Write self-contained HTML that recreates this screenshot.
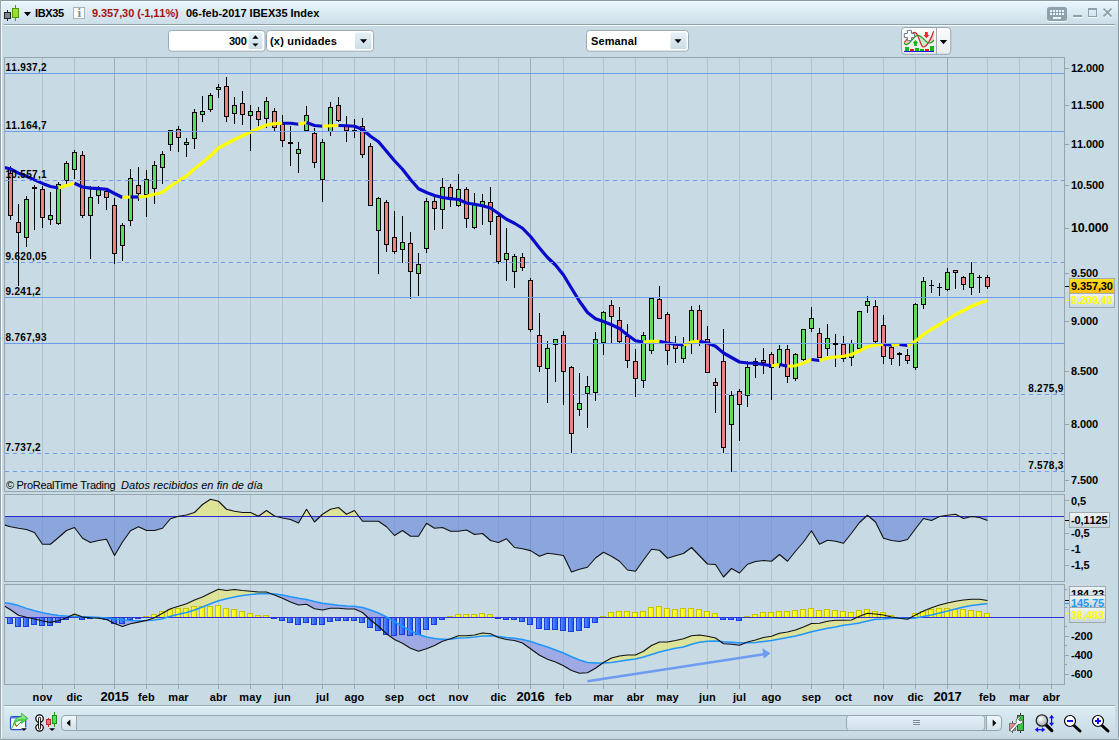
<!DOCTYPE html>
<html lang="es"><head><meta charset="utf-8"><title>IBX35 - IBEX35 Index</title>
<style>
html,body{margin:0;padding:0;background:#C8DAE4;}
body{width:1119px;height:740px;overflow:hidden;position:relative;font-family:"Liberation Sans",Arial,sans-serif;}
svg{position:absolute;left:0;top:0;display:block}
text{font-family:"Liberation Sans",Arial,sans-serif;font-size:11px;font-weight:bold;fill:#000;font-kerning:none}
.ax{font-size:11px;font-weight:bold;letter-spacing:-0.12px}
.yr{font-size:13px;font-weight:bold;letter-spacing:-0.25px}
.big{font-size:12.5px;letter-spacing:-0.15px}
.mo{font-size:11px;letter-spacing:0.1px}
.lb{font-size:10px;letter-spacing:0.3px}
.reg{font-weight:normal}
.crisp{shape-rendering:crispEdges}
</style></head><body>
<svg width="1119" height="740" viewBox="0 0 1119 740">
<defs>
<linearGradient id="gTitle" x1="0" y1="0" x2="0" y2="1"><stop offset="0" stop-color="#E8F7FC"/><stop offset="1" stop-color="#CBDDE7"/></linearGradient>
<linearGradient id="gBottom" x1="0" y1="0" x2="0" y2="1"><stop offset="0" stop-color="#DCECF5"/><stop offset="1" stop-color="#C6D8E2"/></linearGradient>
<linearGradient id="gYel" x1="0" y1="0" x2="0" y2="1"><stop offset="0" stop-color="#FFE11E"/><stop offset="1" stop-color="#F9BC12"/></linearGradient>
<linearGradient id="gLab" x1="0" y1="0" x2="0" y2="1"><stop offset="0" stop-color="#EEF5F9"/><stop offset="1" stop-color="#C6D6DF"/></linearGradient>
<linearGradient id="gSpin" x1="0" y1="0" x2="0" y2="1"><stop offset="0" stop-color="#E6F0F6"/><stop offset="1" stop-color="#CCDDE7"/></linearGradient>
<linearGradient id="gBtn" x1="0" y1="0" x2="0" y2="1"><stop offset="0" stop-color="#F2F8FB"/><stop offset="1" stop-color="#D2E2EB"/></linearGradient>
<linearGradient id="gThumb" x1="0" y1="0" x2="0" y2="1"><stop offset="0" stop-color="#E4F1F8"/><stop offset="1" stop-color="#CFE0EA"/></linearGradient>
<clipPath id="cpMain"><rect x="5" y="58" width="1059" height="433"/></clipPath>
<clipPath id="cpI1"><rect x="5" y="495" width="1059" height="86"/></clipPath>
<clipPath id="cpI2"><rect x="5" y="585" width="1059" height="99"/></clipPath>
</defs>

<rect x="0" y="0" width="1119" height="740" fill="#C8DAE4"/>
<rect x="1" y="1" width="1117" height="23" fill="url(#gTitle)"/>
<g class="crisp">
<rect x="0" y="0" width="1119" height="1" fill="#8C9BA3"/>
<rect x="1" y="1" width="1117" height="1" fill="#F2FBFE"/>
<rect x="0" y="0" width="1" height="740" fill="#96A4AB"/>
<rect x="1" y="1" width="1" height="737" fill="#F4FAFD"/>
<rect x="1118" y="0" width="1" height="740" fill="#8C9BA3"/>
<rect x="4" y="24" width="1111" height="1" fill="#8FA1AB"/>
<rect x="4" y="25" width="1111" height="1" fill="#F3F9FC"/>
<rect x="4" y="707" width="1111" height="31" fill="url(#gBottom)"/>
<rect x="4" y="705" width="1111" height="1" fill="#98AAB4"/>
<rect x="4" y="706" width="1111" height="1" fill="#F3F9FC"/>
<rect x="0" y="738" width="1119" height="1" fill="#C0D1DA"/>
<rect x="0" y="739" width="1119" height="1" fill="#97A4AB"/>
</g>
<g class="crisp">
<rect x="42" y="58" width="1" height="433" fill="#B1C3CD"/>
<rect x="74" y="58" width="1" height="433" fill="#B1C3CD"/>
<rect x="114" y="58" width="1" height="433" fill="#9DAEB8"/>
<rect x="146" y="58" width="1" height="433" fill="#B1C3CD"/>
<rect x="178" y="58" width="1" height="433" fill="#B1C3CD"/>
<rect x="218" y="58" width="1" height="433" fill="#B1C3CD"/>
<rect x="250" y="58" width="1" height="433" fill="#B1C3CD"/>
<rect x="282" y="58" width="1" height="433" fill="#B1C3CD"/>
<rect x="322" y="58" width="1" height="433" fill="#B1C3CD"/>
<rect x="354" y="58" width="1" height="433" fill="#B1C3CD"/>
<rect x="394" y="58" width="1" height="433" fill="#B1C3CD"/>
<rect x="426" y="58" width="1" height="433" fill="#B1C3CD"/>
<rect x="458" y="58" width="1" height="433" fill="#B1C3CD"/>
<rect x="498" y="58" width="1" height="433" fill="#B1C3CD"/>
<rect x="530" y="58" width="1" height="433" fill="#9DAEB8"/>
<rect x="563" y="58" width="1" height="433" fill="#B1C3CD"/>
<rect x="603" y="58" width="1" height="433" fill="#B1C3CD"/>
<rect x="635" y="58" width="1" height="433" fill="#B1C3CD"/>
<rect x="667" y="58" width="1" height="433" fill="#B1C3CD"/>
<rect x="707" y="58" width="1" height="433" fill="#B1C3CD"/>
<rect x="739" y="58" width="1" height="433" fill="#B1C3CD"/>
<rect x="771" y="58" width="1" height="433" fill="#B1C3CD"/>
<rect x="811" y="58" width="1" height="433" fill="#B1C3CD"/>
<rect x="843" y="58" width="1" height="433" fill="#B1C3CD"/>
<rect x="883" y="58" width="1" height="433" fill="#B1C3CD"/>
<rect x="915" y="58" width="1" height="433" fill="#B1C3CD"/>
<rect x="947" y="58" width="1" height="433" fill="#9DAEB8"/>
<rect x="987" y="58" width="1" height="433" fill="#B1C3CD"/>
<rect x="1019" y="58" width="1" height="433" fill="#B1C3CD"/>
<rect x="1051" y="58" width="1" height="433" fill="#B1C3CD"/>
<rect x="42" y="495" width="1" height="86" fill="#B1C3CD"/>
<rect x="74" y="495" width="1" height="86" fill="#B1C3CD"/>
<rect x="114" y="495" width="1" height="86" fill="#9DAEB8"/>
<rect x="146" y="495" width="1" height="86" fill="#B1C3CD"/>
<rect x="178" y="495" width="1" height="86" fill="#B1C3CD"/>
<rect x="218" y="495" width="1" height="86" fill="#B1C3CD"/>
<rect x="250" y="495" width="1" height="86" fill="#B1C3CD"/>
<rect x="282" y="495" width="1" height="86" fill="#B1C3CD"/>
<rect x="322" y="495" width="1" height="86" fill="#B1C3CD"/>
<rect x="354" y="495" width="1" height="86" fill="#B1C3CD"/>
<rect x="394" y="495" width="1" height="86" fill="#B1C3CD"/>
<rect x="426" y="495" width="1" height="86" fill="#B1C3CD"/>
<rect x="458" y="495" width="1" height="86" fill="#B1C3CD"/>
<rect x="498" y="495" width="1" height="86" fill="#B1C3CD"/>
<rect x="530" y="495" width="1" height="86" fill="#9DAEB8"/>
<rect x="563" y="495" width="1" height="86" fill="#B1C3CD"/>
<rect x="603" y="495" width="1" height="86" fill="#B1C3CD"/>
<rect x="635" y="495" width="1" height="86" fill="#B1C3CD"/>
<rect x="667" y="495" width="1" height="86" fill="#B1C3CD"/>
<rect x="707" y="495" width="1" height="86" fill="#B1C3CD"/>
<rect x="739" y="495" width="1" height="86" fill="#B1C3CD"/>
<rect x="771" y="495" width="1" height="86" fill="#B1C3CD"/>
<rect x="811" y="495" width="1" height="86" fill="#B1C3CD"/>
<rect x="843" y="495" width="1" height="86" fill="#B1C3CD"/>
<rect x="883" y="495" width="1" height="86" fill="#B1C3CD"/>
<rect x="915" y="495" width="1" height="86" fill="#B1C3CD"/>
<rect x="947" y="495" width="1" height="86" fill="#9DAEB8"/>
<rect x="987" y="495" width="1" height="86" fill="#B1C3CD"/>
<rect x="1019" y="495" width="1" height="86" fill="#B1C3CD"/>
<rect x="1051" y="495" width="1" height="86" fill="#B1C3CD"/>
<rect x="42" y="585" width="1" height="99" fill="#B1C3CD"/>
<rect x="74" y="585" width="1" height="99" fill="#B1C3CD"/>
<rect x="114" y="585" width="1" height="99" fill="#9DAEB8"/>
<rect x="146" y="585" width="1" height="99" fill="#B1C3CD"/>
<rect x="178" y="585" width="1" height="99" fill="#B1C3CD"/>
<rect x="218" y="585" width="1" height="99" fill="#B1C3CD"/>
<rect x="250" y="585" width="1" height="99" fill="#B1C3CD"/>
<rect x="282" y="585" width="1" height="99" fill="#B1C3CD"/>
<rect x="322" y="585" width="1" height="99" fill="#B1C3CD"/>
<rect x="354" y="585" width="1" height="99" fill="#B1C3CD"/>
<rect x="394" y="585" width="1" height="99" fill="#B1C3CD"/>
<rect x="426" y="585" width="1" height="99" fill="#B1C3CD"/>
<rect x="458" y="585" width="1" height="99" fill="#B1C3CD"/>
<rect x="498" y="585" width="1" height="99" fill="#B1C3CD"/>
<rect x="530" y="585" width="1" height="99" fill="#9DAEB8"/>
<rect x="563" y="585" width="1" height="99" fill="#B1C3CD"/>
<rect x="603" y="585" width="1" height="99" fill="#B1C3CD"/>
<rect x="635" y="585" width="1" height="99" fill="#B1C3CD"/>
<rect x="667" y="585" width="1" height="99" fill="#B1C3CD"/>
<rect x="707" y="585" width="1" height="99" fill="#B1C3CD"/>
<rect x="739" y="585" width="1" height="99" fill="#B1C3CD"/>
<rect x="771" y="585" width="1" height="99" fill="#B1C3CD"/>
<rect x="811" y="585" width="1" height="99" fill="#B1C3CD"/>
<rect x="843" y="585" width="1" height="99" fill="#B1C3CD"/>
<rect x="883" y="585" width="1" height="99" fill="#B1C3CD"/>
<rect x="915" y="585" width="1" height="99" fill="#B1C3CD"/>
<rect x="947" y="585" width="1" height="99" fill="#9DAEB8"/>
<rect x="987" y="585" width="1" height="99" fill="#B1C3CD"/>
<rect x="1019" y="585" width="1" height="99" fill="#B1C3CD"/>
<rect x="1051" y="585" width="1" height="99" fill="#B1C3CD"/>
<rect x="4.5" y="57.5" width="1060" height="434" fill="none" stroke="#95A6AF" stroke-width="1"/>
<rect x="4.5" y="494.5" width="1060" height="87" fill="none" stroke="#95A6AF" stroke-width="1"/>
<rect x="4.5" y="584.5" width="1060" height="100" fill="none" stroke="#95A6AF" stroke-width="1"/>
</g>
<g class="crisp" clip-path="url(#cpMain)">
<rect x="10" y="166" width="1" height="54" fill="#000"/>
<rect x="8" y="173" width="5" height="43" fill="#000"/>
<rect x="9" y="174" width="3" height="41" fill="#F08080"/>
<rect x="18" y="204" width="1" height="82" fill="#000"/>
<rect x="16" y="222" width="5" height="11" fill="#000"/>
<rect x="17" y="223" width="3" height="9" fill="#F08080"/>
<rect x="26" y="196" width="1" height="51" fill="#000"/>
<rect x="24" y="199" width="5" height="39" fill="#000"/>
<rect x="25" y="200" width="3" height="37" fill="#5CDC5C"/>
<rect x="34" y="185" width="1" height="45" fill="#000"/>
<rect x="32" y="187" width="5" height="2" fill="#000"/>
<rect x="42" y="186" width="1" height="42" fill="#000"/>
<rect x="40" y="189" width="5" height="29" fill="#000"/>
<rect x="41" y="190" width="3" height="27" fill="#F08080"/>
<rect x="50" y="192" width="1" height="33" fill="#000"/>
<rect x="48" y="215" width="5" height="5" fill="#000"/>
<rect x="49" y="216" width="3" height="3" fill="#5CDC5C"/>
<rect x="58" y="182" width="1" height="43" fill="#000"/>
<rect x="56" y="184" width="5" height="40" fill="#000"/>
<rect x="57" y="185" width="3" height="38" fill="#5CDC5C"/>
<rect x="66" y="161" width="1" height="23" fill="#000"/>
<rect x="64" y="163" width="5" height="18" fill="#000"/>
<rect x="65" y="164" width="3" height="16" fill="#5CDC5C"/>
<rect x="74" y="150" width="1" height="29" fill="#000"/>
<rect x="72" y="152" width="5" height="18" fill="#000"/>
<rect x="73" y="153" width="3" height="16" fill="#5CDC5C"/>
<rect x="82" y="151" width="1" height="67" fill="#000"/>
<rect x="80" y="155" width="5" height="61" fill="#000"/>
<rect x="81" y="156" width="3" height="59" fill="#F08080"/>
<rect x="90" y="186" width="1" height="73" fill="#000"/>
<rect x="88" y="197" width="5" height="19" fill="#000"/>
<rect x="89" y="198" width="3" height="17" fill="#5CDC5C"/>
<rect x="98" y="186" width="1" height="18" fill="#000"/>
<rect x="96" y="188" width="5" height="8" fill="#000"/>
<rect x="97" y="189" width="3" height="6" fill="#5CDC5C"/>
<rect x="106" y="188" width="1" height="22" fill="#000"/>
<rect x="104" y="191" width="5" height="7" fill="#000"/>
<rect x="105" y="192" width="3" height="5" fill="#F08080"/>
<rect x="114" y="198" width="1" height="66" fill="#000"/>
<rect x="112" y="205" width="5" height="49" fill="#000"/>
<rect x="113" y="206" width="3" height="47" fill="#F08080"/>
<rect x="122" y="223" width="1" height="38" fill="#000"/>
<rect x="120" y="225" width="5" height="21" fill="#000"/>
<rect x="121" y="226" width="3" height="19" fill="#5CDC5C"/>
<rect x="130" y="169" width="1" height="57" fill="#000"/>
<rect x="128" y="178" width="5" height="43" fill="#000"/>
<rect x="129" y="179" width="3" height="41" fill="#5CDC5C"/>
<rect x="138" y="167" width="1" height="34" fill="#000"/>
<rect x="136" y="185" width="5" height="9" fill="#000"/>
<rect x="137" y="186" width="3" height="7" fill="#F08080"/>
<rect x="146" y="170" width="1" height="47" fill="#000"/>
<rect x="144" y="179" width="5" height="16" fill="#000"/>
<rect x="145" y="180" width="3" height="14" fill="#5CDC5C"/>
<rect x="154" y="161" width="1" height="43" fill="#000"/>
<rect x="152" y="165" width="5" height="24" fill="#000"/>
<rect x="153" y="166" width="3" height="22" fill="#5CDC5C"/>
<rect x="162" y="151" width="1" height="33" fill="#000"/>
<rect x="160" y="154" width="5" height="14" fill="#000"/>
<rect x="161" y="155" width="3" height="12" fill="#5CDC5C"/>
<rect x="170" y="130" width="1" height="21" fill="#000"/>
<rect x="168" y="130" width="5" height="15" fill="#000"/>
<rect x="169" y="131" width="3" height="13" fill="#5CDC5C"/>
<rect x="178" y="126" width="1" height="26" fill="#000"/>
<rect x="176" y="129" width="5" height="9" fill="#000"/>
<rect x="177" y="130" width="3" height="7" fill="#F08080"/>
<rect x="186" y="138" width="1" height="19" fill="#000"/>
<rect x="184" y="142" width="5" height="3" fill="#000"/>
<rect x="185" y="143" width="3" height="1" fill="#5CDC5C"/>
<rect x="194" y="109" width="1" height="40" fill="#000"/>
<rect x="192" y="112" width="5" height="27" fill="#000"/>
<rect x="193" y="113" width="3" height="25" fill="#5CDC5C"/>
<rect x="202" y="96" width="1" height="26" fill="#000"/>
<rect x="200" y="111" width="5" height="4" fill="#000"/>
<rect x="201" y="112" width="3" height="2" fill="#5CDC5C"/>
<rect x="210" y="93" width="1" height="19" fill="#000"/>
<rect x="208" y="95" width="5" height="15" fill="#000"/>
<rect x="209" y="96" width="3" height="13" fill="#5CDC5C"/>
<rect x="218" y="84" width="1" height="14" fill="#000"/>
<rect x="216" y="87" width="5" height="3" fill="#000"/>
<rect x="217" y="88" width="3" height="1" fill="#5CDC5C"/>
<rect x="226" y="77" width="1" height="45" fill="#000"/>
<rect x="224" y="86" width="5" height="31" fill="#000"/>
<rect x="225" y="87" width="3" height="29" fill="#F08080"/>
<rect x="234" y="97" width="1" height="27" fill="#000"/>
<rect x="232" y="105" width="5" height="9" fill="#000"/>
<rect x="233" y="106" width="3" height="7" fill="#5CDC5C"/>
<rect x="242" y="91" width="1" height="34" fill="#000"/>
<rect x="240" y="103" width="5" height="12" fill="#000"/>
<rect x="241" y="104" width="3" height="10" fill="#F08080"/>
<rect x="250" y="105" width="1" height="46" fill="#000"/>
<rect x="248" y="111" width="5" height="5" fill="#000"/>
<rect x="249" y="112" width="3" height="3" fill="#5CDC5C"/>
<rect x="258" y="107" width="1" height="19" fill="#000"/>
<rect x="256" y="111" width="5" height="9" fill="#000"/>
<rect x="257" y="112" width="3" height="7" fill="#F08080"/>
<rect x="266" y="97" width="1" height="31" fill="#000"/>
<rect x="264" y="101" width="5" height="18" fill="#000"/>
<rect x="265" y="102" width="3" height="16" fill="#5CDC5C"/>
<rect x="274" y="108" width="1" height="23" fill="#000"/>
<rect x="272" y="111" width="5" height="17" fill="#000"/>
<rect x="273" y="112" width="3" height="15" fill="#F08080"/>
<rect x="282" y="115" width="1" height="32" fill="#000"/>
<rect x="280" y="124" width="5" height="17" fill="#000"/>
<rect x="281" y="125" width="3" height="15" fill="#F08080"/>
<rect x="290" y="126" width="1" height="40" fill="#000"/>
<rect x="288" y="142" width="5" height="2" fill="#000"/>
<rect x="298" y="142" width="1" height="31" fill="#000"/>
<rect x="296" y="149" width="5" height="5" fill="#000"/>
<rect x="297" y="150" width="3" height="3" fill="#5CDC5C"/>
<rect x="306" y="106" width="1" height="25" fill="#000"/>
<rect x="304" y="115" width="5" height="16" fill="#000"/>
<rect x="305" y="116" width="3" height="14" fill="#5CDC5C"/>
<rect x="314" y="128" width="1" height="40" fill="#000"/>
<rect x="312" y="133" width="5" height="30" fill="#000"/>
<rect x="313" y="134" width="3" height="28" fill="#F08080"/>
<rect x="322" y="139" width="1" height="63" fill="#000"/>
<rect x="320" y="142" width="5" height="38" fill="#000"/>
<rect x="321" y="143" width="3" height="36" fill="#5CDC5C"/>
<rect x="330" y="102" width="1" height="34" fill="#000"/>
<rect x="328" y="107" width="5" height="25" fill="#000"/>
<rect x="329" y="108" width="3" height="23" fill="#5CDC5C"/>
<rect x="338" y="97" width="1" height="25" fill="#000"/>
<rect x="336" y="105" width="5" height="16" fill="#000"/>
<rect x="337" y="106" width="3" height="14" fill="#F08080"/>
<rect x="346" y="116" width="1" height="26" fill="#000"/>
<rect x="344" y="125" width="5" height="6" fill="#000"/>
<rect x="345" y="126" width="3" height="4" fill="#F08080"/>
<rect x="354" y="119" width="1" height="19" fill="#000"/>
<rect x="352" y="130" width="5" height="1" fill="#000"/>
<rect x="362" y="118" width="1" height="40" fill="#000"/>
<rect x="360" y="126" width="5" height="29" fill="#000"/>
<rect x="361" y="127" width="3" height="27" fill="#F08080"/>
<rect x="370" y="143" width="1" height="63" fill="#000"/>
<rect x="368" y="146" width="5" height="60" fill="#000"/>
<rect x="369" y="147" width="3" height="58" fill="#F08080"/>
<rect x="378" y="197" width="1" height="77" fill="#000"/>
<rect x="376" y="198" width="5" height="33" fill="#000"/>
<rect x="377" y="199" width="3" height="31" fill="#5CDC5C"/>
<rect x="386" y="200" width="1" height="52" fill="#000"/>
<rect x="384" y="202" width="5" height="43" fill="#000"/>
<rect x="385" y="203" width="3" height="41" fill="#F08080"/>
<rect x="394" y="211" width="1" height="43" fill="#000"/>
<rect x="392" y="237" width="5" height="15" fill="#000"/>
<rect x="393" y="238" width="3" height="13" fill="#F08080"/>
<rect x="402" y="216" width="1" height="47" fill="#000"/>
<rect x="400" y="242" width="5" height="8" fill="#000"/>
<rect x="401" y="243" width="3" height="6" fill="#5CDC5C"/>
<rect x="410" y="232" width="1" height="67" fill="#000"/>
<rect x="408" y="243" width="5" height="29" fill="#000"/>
<rect x="409" y="244" width="3" height="27" fill="#F08080"/>
<rect x="418" y="253" width="1" height="43" fill="#000"/>
<rect x="416" y="264" width="5" height="10" fill="#000"/>
<rect x="417" y="265" width="3" height="8" fill="#5CDC5C"/>
<rect x="426" y="198" width="1" height="55" fill="#000"/>
<rect x="424" y="201" width="5" height="48" fill="#000"/>
<rect x="425" y="202" width="3" height="46" fill="#5CDC5C"/>
<rect x="434" y="197" width="1" height="33" fill="#000"/>
<rect x="432" y="201" width="5" height="8" fill="#000"/>
<rect x="433" y="202" width="3" height="6" fill="#F08080"/>
<rect x="442" y="178" width="1" height="51" fill="#000"/>
<rect x="440" y="187" width="5" height="23" fill="#000"/>
<rect x="441" y="188" width="3" height="21" fill="#5CDC5C"/>
<rect x="450" y="184" width="1" height="23" fill="#000"/>
<rect x="448" y="187" width="5" height="11" fill="#000"/>
<rect x="449" y="188" width="3" height="9" fill="#F08080"/>
<rect x="458" y="174" width="1" height="33" fill="#000"/>
<rect x="456" y="189" width="5" height="17" fill="#000"/>
<rect x="457" y="190" width="3" height="15" fill="#5CDC5C"/>
<rect x="466" y="187" width="1" height="41" fill="#000"/>
<rect x="464" y="189" width="5" height="30" fill="#000"/>
<rect x="465" y="190" width="3" height="28" fill="#F08080"/>
<rect x="474" y="193" width="1" height="36" fill="#000"/>
<rect x="472" y="204" width="5" height="24" fill="#000"/>
<rect x="473" y="205" width="3" height="22" fill="#5CDC5C"/>
<rect x="482" y="194" width="1" height="31" fill="#000"/>
<rect x="480" y="201" width="5" height="5" fill="#000"/>
<rect x="481" y="202" width="3" height="3" fill="#5CDC5C"/>
<rect x="490" y="187" width="1" height="48" fill="#000"/>
<rect x="488" y="202" width="5" height="20" fill="#000"/>
<rect x="489" y="203" width="3" height="18" fill="#F08080"/>
<rect x="498" y="215" width="1" height="49" fill="#000"/>
<rect x="496" y="216" width="5" height="46" fill="#000"/>
<rect x="497" y="217" width="3" height="44" fill="#F08080"/>
<rect x="506" y="228" width="1" height="53" fill="#000"/>
<rect x="504" y="253" width="5" height="7" fill="#000"/>
<rect x="505" y="254" width="3" height="5" fill="#5CDC5C"/>
<rect x="514" y="254" width="1" height="34" fill="#000"/>
<rect x="512" y="256" width="5" height="16" fill="#000"/>
<rect x="513" y="257" width="3" height="14" fill="#5CDC5C"/>
<rect x="522" y="253" width="1" height="18" fill="#000"/>
<rect x="520" y="257" width="5" height="11" fill="#000"/>
<rect x="521" y="258" width="3" height="9" fill="#F08080"/>
<rect x="530" y="278" width="1" height="54" fill="#000"/>
<rect x="528" y="280" width="5" height="50" fill="#000"/>
<rect x="529" y="281" width="3" height="48" fill="#F08080"/>
<rect x="539" y="313" width="1" height="59" fill="#000"/>
<rect x="537" y="335" width="5" height="32" fill="#000"/>
<rect x="538" y="336" width="3" height="30" fill="#F08080"/>
<rect x="547" y="341" width="1" height="62" fill="#000"/>
<rect x="545" y="348" width="5" height="21" fill="#000"/>
<rect x="546" y="349" width="3" height="19" fill="#5CDC5C"/>
<rect x="555" y="339" width="1" height="43" fill="#000"/>
<rect x="553" y="339" width="5" height="6" fill="#000"/>
<rect x="554" y="340" width="3" height="4" fill="#5CDC5C"/>
<rect x="563" y="331" width="1" height="74" fill="#000"/>
<rect x="561" y="335" width="5" height="37" fill="#000"/>
<rect x="562" y="336" width="3" height="35" fill="#F08080"/>
<rect x="571" y="366" width="1" height="87" fill="#000"/>
<rect x="569" y="367" width="5" height="67" fill="#000"/>
<rect x="570" y="368" width="3" height="65" fill="#F08080"/>
<rect x="579" y="373" width="1" height="43" fill="#000"/>
<rect x="577" y="403" width="5" height="7" fill="#000"/>
<rect x="578" y="404" width="3" height="5" fill="#5CDC5C"/>
<rect x="587" y="376" width="1" height="52" fill="#000"/>
<rect x="585" y="386" width="5" height="8" fill="#000"/>
<rect x="586" y="387" width="3" height="6" fill="#5CDC5C"/>
<rect x="595" y="332" width="1" height="69" fill="#000"/>
<rect x="593" y="339" width="5" height="54" fill="#000"/>
<rect x="594" y="340" width="3" height="52" fill="#5CDC5C"/>
<rect x="603" y="311" width="1" height="44" fill="#000"/>
<rect x="601" y="312" width="5" height="31" fill="#000"/>
<rect x="602" y="313" width="3" height="29" fill="#5CDC5C"/>
<rect x="611" y="300" width="1" height="43" fill="#000"/>
<rect x="609" y="305" width="5" height="12" fill="#000"/>
<rect x="610" y="306" width="3" height="10" fill="#F08080"/>
<rect x="619" y="307" width="1" height="36" fill="#000"/>
<rect x="617" y="320" width="5" height="22" fill="#000"/>
<rect x="618" y="321" width="3" height="20" fill="#F08080"/>
<rect x="627" y="324" width="1" height="44" fill="#000"/>
<rect x="625" y="336" width="5" height="25" fill="#000"/>
<rect x="626" y="337" width="3" height="23" fill="#F08080"/>
<rect x="635" y="349" width="1" height="48" fill="#000"/>
<rect x="633" y="361" width="5" height="18" fill="#000"/>
<rect x="634" y="362" width="3" height="16" fill="#F08080"/>
<rect x="643" y="332" width="1" height="56" fill="#000"/>
<rect x="641" y="335" width="5" height="46" fill="#000"/>
<rect x="642" y="336" width="3" height="44" fill="#5CDC5C"/>
<rect x="651" y="298" width="1" height="56" fill="#000"/>
<rect x="649" y="298" width="5" height="53" fill="#000"/>
<rect x="650" y="299" width="3" height="51" fill="#5CDC5C"/>
<rect x="659" y="286" width="1" height="33" fill="#000"/>
<rect x="657" y="299" width="5" height="20" fill="#000"/>
<rect x="658" y="300" width="3" height="18" fill="#F08080"/>
<rect x="667" y="312" width="1" height="53" fill="#000"/>
<rect x="665" y="314" width="5" height="37" fill="#000"/>
<rect x="666" y="315" width="3" height="35" fill="#F08080"/>
<rect x="675" y="336" width="1" height="27" fill="#000"/>
<rect x="673" y="344" width="5" height="5" fill="#000"/>
<rect x="674" y="345" width="3" height="3" fill="#F08080"/>
<rect x="683" y="337" width="1" height="26" fill="#000"/>
<rect x="681" y="345" width="5" height="14" fill="#000"/>
<rect x="682" y="346" width="3" height="12" fill="#5CDC5C"/>
<rect x="691" y="306" width="1" height="48" fill="#000"/>
<rect x="689" y="310" width="5" height="33" fill="#000"/>
<rect x="690" y="311" width="3" height="31" fill="#5CDC5C"/>
<rect x="699" y="305" width="1" height="41" fill="#000"/>
<rect x="697" y="310" width="5" height="32" fill="#000"/>
<rect x="698" y="311" width="3" height="30" fill="#F08080"/>
<rect x="707" y="326" width="1" height="47" fill="#000"/>
<rect x="705" y="339" width="5" height="34" fill="#000"/>
<rect x="706" y="340" width="3" height="32" fill="#F08080"/>
<rect x="715" y="378" width="1" height="35" fill="#000"/>
<rect x="713" y="382" width="5" height="4" fill="#000"/>
<rect x="714" y="383" width="3" height="2" fill="#F08080"/>
<rect x="723" y="329" width="1" height="124" fill="#000"/>
<rect x="721" y="361" width="5" height="87" fill="#000"/>
<rect x="722" y="362" width="3" height="85" fill="#F08080"/>
<rect x="731" y="391" width="1" height="81" fill="#000"/>
<rect x="729" y="395" width="5" height="30" fill="#000"/>
<rect x="730" y="396" width="3" height="28" fill="#5CDC5C"/>
<rect x="739" y="389" width="1" height="52" fill="#000"/>
<rect x="737" y="391" width="5" height="14" fill="#000"/>
<rect x="738" y="392" width="3" height="12" fill="#F08080"/>
<rect x="747" y="361" width="1" height="46" fill="#000"/>
<rect x="745" y="367" width="5" height="29" fill="#000"/>
<rect x="746" y="368" width="3" height="27" fill="#5CDC5C"/>
<rect x="755" y="358" width="1" height="20" fill="#000"/>
<rect x="753" y="361" width="5" height="5" fill="#000"/>
<rect x="754" y="362" width="3" height="3" fill="#5CDC5C"/>
<rect x="763" y="348" width="1" height="26" fill="#000"/>
<rect x="761" y="360" width="5" height="3" fill="#000"/>
<rect x="762" y="361" width="3" height="1" fill="#F08080"/>
<rect x="771" y="352" width="1" height="48" fill="#000"/>
<rect x="769" y="354" width="5" height="14" fill="#000"/>
<rect x="770" y="355" width="3" height="12" fill="#F08080"/>
<rect x="779" y="345" width="1" height="23" fill="#000"/>
<rect x="777" y="349" width="5" height="16" fill="#000"/>
<rect x="778" y="350" width="3" height="14" fill="#5CDC5C"/>
<rect x="787" y="345" width="1" height="38" fill="#000"/>
<rect x="785" y="349" width="5" height="28" fill="#000"/>
<rect x="786" y="350" width="3" height="26" fill="#F08080"/>
<rect x="795" y="353" width="1" height="28" fill="#000"/>
<rect x="793" y="354" width="5" height="25" fill="#000"/>
<rect x="794" y="355" width="3" height="23" fill="#5CDC5C"/>
<rect x="803" y="329" width="1" height="32" fill="#000"/>
<rect x="801" y="329" width="5" height="31" fill="#000"/>
<rect x="802" y="330" width="3" height="29" fill="#5CDC5C"/>
<rect x="811" y="307" width="1" height="25" fill="#000"/>
<rect x="809" y="318" width="5" height="11" fill="#000"/>
<rect x="810" y="319" width="3" height="9" fill="#5CDC5C"/>
<rect x="819" y="328" width="1" height="30" fill="#000"/>
<rect x="817" y="333" width="5" height="25" fill="#000"/>
<rect x="818" y="334" width="3" height="23" fill="#F08080"/>
<rect x="827" y="324" width="1" height="32" fill="#000"/>
<rect x="825" y="338" width="5" height="11" fill="#000"/>
<rect x="826" y="339" width="3" height="9" fill="#5CDC5C"/>
<rect x="835" y="334" width="1" height="33" fill="#000"/>
<rect x="833" y="343" width="5" height="2" fill="#000"/>
<rect x="843" y="336" width="1" height="26" fill="#000"/>
<rect x="841" y="344" width="5" height="15" fill="#000"/>
<rect x="842" y="345" width="3" height="13" fill="#F08080"/>
<rect x="851" y="340" width="1" height="26" fill="#000"/>
<rect x="849" y="343" width="5" height="15" fill="#000"/>
<rect x="850" y="344" width="3" height="13" fill="#5CDC5C"/>
<rect x="859" y="311" width="1" height="38" fill="#000"/>
<rect x="857" y="311" width="5" height="38" fill="#000"/>
<rect x="858" y="312" width="3" height="36" fill="#5CDC5C"/>
<rect x="867" y="296" width="1" height="17" fill="#000"/>
<rect x="865" y="301" width="5" height="5" fill="#000"/>
<rect x="866" y="302" width="3" height="3" fill="#5CDC5C"/>
<rect x="875" y="300" width="1" height="43" fill="#000"/>
<rect x="873" y="306" width="5" height="36" fill="#000"/>
<rect x="874" y="307" width="3" height="34" fill="#F08080"/>
<rect x="883" y="315" width="1" height="49" fill="#000"/>
<rect x="881" y="325" width="5" height="32" fill="#000"/>
<rect x="882" y="326" width="3" height="30" fill="#F08080"/>
<rect x="891" y="345" width="1" height="20" fill="#000"/>
<rect x="889" y="347" width="5" height="12" fill="#000"/>
<rect x="890" y="348" width="3" height="10" fill="#F08080"/>
<rect x="899" y="352" width="1" height="14" fill="#000"/>
<rect x="897" y="353" width="5" height="2" fill="#000"/>
<rect x="907" y="349" width="1" height="15" fill="#000"/>
<rect x="905" y="355" width="5" height="6" fill="#000"/>
<rect x="906" y="356" width="3" height="4" fill="#F08080"/>
<rect x="915" y="303" width="1" height="67" fill="#000"/>
<rect x="913" y="304" width="5" height="64" fill="#000"/>
<rect x="914" y="305" width="3" height="62" fill="#5CDC5C"/>
<rect x="923" y="277" width="1" height="32" fill="#000"/>
<rect x="921" y="281" width="5" height="24" fill="#000"/>
<rect x="922" y="282" width="3" height="22" fill="#5CDC5C"/>
<rect x="931" y="280" width="1" height="13" fill="#000"/>
<rect x="929" y="285" width="5" height="1" fill="#000"/>
<rect x="939" y="283" width="1" height="13" fill="#000"/>
<rect x="937" y="287" width="5" height="1" fill="#000"/>
<rect x="947" y="268" width="1" height="23" fill="#000"/>
<rect x="945" y="272" width="5" height="18" fill="#000"/>
<rect x="946" y="273" width="3" height="16" fill="#5CDC5C"/>
<rect x="955" y="270" width="1" height="19" fill="#000"/>
<rect x="953" y="270" width="5" height="3" fill="#000"/>
<rect x="954" y="271" width="3" height="1" fill="#F08080"/>
<rect x="963" y="276" width="1" height="14" fill="#000"/>
<rect x="961" y="277" width="5" height="8" fill="#000"/>
<rect x="962" y="278" width="3" height="6" fill="#F08080"/>
<rect x="971" y="262" width="1" height="33" fill="#000"/>
<rect x="969" y="273" width="5" height="15" fill="#000"/>
<rect x="970" y="274" width="3" height="13" fill="#5CDC5C"/>
<rect x="979" y="275" width="1" height="18" fill="#000"/>
<rect x="977" y="277" width="5" height="1" fill="#000"/>
<rect x="987" y="275" width="1" height="14" fill="#000"/>
<rect x="985" y="277" width="5" height="10" fill="#000"/>
<rect x="986" y="278" width="3" height="8" fill="#F08080"/>
</g>
<g clip-path="url(#cpMain)" fill="none" stroke-width="3.2" stroke-linecap="butt" stroke-linejoin="round">
<polyline points="4.50,167.50 10.50,169.00 18.50,173.20 26.50,176.30 34.50,179.90 42.50,183.40 50.50,186.50 58.50,188.00" stroke="#0A0ACD"/>
<polyline points="58.50,188.00 66.50,185.50 74.50,183.25" stroke="#FFFF00"/>
<polyline points="74.50,183.25 82.50,187.00 90.50,188.20 98.50,188.60 106.50,189.25 114.50,193.50 122.50,197.50" stroke="#0A0ACD"/>
<polyline points="122.50,197.50 130.50,197.00" stroke="#FFFF00"/>
<polyline points="130.50,197.00 138.50,197.00" stroke="#0A0ACD"/>
<polyline points="138.50,197.00 146.50,196.25 154.50,194.25 162.50,192.30 170.50,186.25 178.50,180.80 186.50,176.20 194.50,168.75 202.50,162.50 210.50,155.75 218.50,148.00 226.50,143.75 234.50,139.50 242.50,135.75 250.50,132.00 258.50,128.50 266.50,125.00 274.50,123.60 282.50,123.25" stroke="#FFFF00"/>
<polyline points="282.50,123.25 290.50,123.25 298.50,124.25" stroke="#0A0ACD"/>
<polyline points="298.50,124.25 306.50,122.50" stroke="#FFFF00"/>
<polyline points="306.50,122.50 314.50,125.50 322.50,126.25" stroke="#0A0ACD"/>
<polyline points="322.50,126.25 330.50,125.75 338.50,125.50" stroke="#FFFF00"/>
<polyline points="338.50,125.50 346.50,125.75 354.50,126.25 362.50,129.50 370.50,136.25 378.50,141.75 386.50,151.25 394.50,160.75 402.50,169.25 410.50,179.50 418.50,188.75 426.50,192.50 434.50,195.50 442.50,197.50 450.50,198.75 458.50,199.50 466.50,203.00 474.50,204.25 482.50,205.75 490.50,208.00 498.50,213.50 506.50,219.25 514.50,223.25 522.50,228.25 530.50,236.50 539.50,248.00 547.50,257.50 555.50,265.00 563.50,275.00 571.50,288.25 579.50,301.25 587.50,312.50 595.50,318.75 603.50,321.50 611.50,324.75 619.50,328.50 627.50,335.00 635.50,340.75 643.50,342.00" stroke="#0A0ACD"/>
<polyline points="643.50,342.00 651.50,341.25 659.50,341.25" stroke="#FFFF00"/>
<polyline points="659.50,341.25 667.50,343.00 675.50,344.25 683.50,345.00" stroke="#0A0ACD"/>
<polyline points="683.50,345.00 691.50,342.00 699.50,341.25" stroke="#FFFF00"/>
<polyline points="699.50,341.25 707.50,343.00 715.50,346.25 723.50,353.00 731.50,357.50 739.50,362.00 747.50,363.00 755.50,363.25 763.50,364.50 771.50,365.75" stroke="#0A0ACD"/>
<polyline points="771.50,365.75 779.50,364.50" stroke="#FFFF00"/>
<polyline points="779.50,364.50 787.50,366.25" stroke="#0A0ACD"/>
<polyline points="787.50,366.25 795.50,365.75 803.50,363.00 811.50,359.50" stroke="#FFFF00"/>
<polyline points="811.50,359.50 819.50,360.50" stroke="#0A0ACD"/>
<polyline points="819.50,360.50 827.50,358.00 835.50,357.00 843.50,356.25 851.50,354.50 859.50,350.75 867.50,346.75 875.50,345.00 883.50,344.50" stroke="#FFFF00"/>
<polyline points="883.50,344.50 891.50,345.00" stroke="#0A0ACD"/>
<polyline points="891.50,345.00 899.50,344.50" stroke="#FFFF00"/>
<polyline points="899.50,344.50 907.50,345.50" stroke="#0A0ACD"/>
<polyline points="907.50,345.50 915.50,341.25 923.50,334.50 931.50,329.25 939.50,324.50 947.50,319.50 955.50,314.50 963.50,310.50 971.50,306.25 979.50,303.00 987.50,300.50" stroke="#FFFF00"/>
</g>
<g class="crisp">
<rect x="5" y="73" width="1059" height="1" fill="#6C9BEF"/>
<rect x="5" y="131" width="1059" height="1" fill="#6C9BEF"/>
<rect x="5" y="297" width="1059" height="1" fill="#6C9BEF"/>
<rect x="5" y="343" width="1059" height="1" fill="#6C9BEF"/>
<line x1="5" y1="180.5" x2="1064" y2="180.5" stroke="#6C9BEF" stroke-width="1" stroke-dasharray="4 4"/>
<line x1="5" y1="262.5" x2="1064" y2="262.5" stroke="#6C9BEF" stroke-width="1" stroke-dasharray="4 4"/>
<line x1="5" y1="394.5" x2="1064" y2="394.5" stroke="#6C9BEF" stroke-width="1" stroke-dasharray="4 4"/>
<line x1="5" y1="453.5" x2="1064" y2="453.5" stroke="#6C9BEF" stroke-width="1" stroke-dasharray="4 4"/>
<line x1="5" y1="471.5" x2="1064" y2="471.5" stroke="#6C9BEF" stroke-width="1" stroke-dasharray="4 4"/>
</g>
<g class="crisp">
<rect x="833" y="343" width="5" height="2" fill="#000"/>
</g>
<text x="5.5" y="71" text-anchor="start" class="lb" >11.937,2</text>
<text x="5.5" y="129" text-anchor="start" class="lb" >11.164,7</text>
<text x="5.5" y="178" text-anchor="start" class="lb" >10.557,1</text>
<text x="5.5" y="260" text-anchor="start" class="lb" >9.620,05</text>
<text x="5.5" y="295" text-anchor="start" class="lb" >9.241,2</text>
<text x="5.5" y="341" text-anchor="start" class="lb" >8.767,93</text>
<text x="5.5" y="451" text-anchor="start" class="lb" >7.737,2</text>
<text x="1063.6" y="392" text-anchor="end" class="lb" >8.275,9</text>
<text x="1063.6" y="469" text-anchor="end" class="lb" >7.578,3</text>
<text x="6" y="489" text-anchor="start" class="reg" style="letter-spacing:-0.3px">© ProRealTime Trading</text>
<text x="121" y="489" text-anchor="start" class="reg" font-style="italic" style="letter-spacing:0.08px">Datos recibidos en fin de día</text>
<g class="crisp">
<rect x="1065" y="68" width="4" height="1" fill="#95A6AF"/>
<rect x="1065" y="105" width="4" height="1" fill="#95A6AF"/>
<rect x="1065" y="144" width="4" height="1" fill="#95A6AF"/>
<rect x="1065" y="185" width="4" height="1" fill="#95A6AF"/>
<rect x="1065" y="228" width="4" height="1" fill="#95A6AF"/>
<rect x="1065" y="273" width="4" height="1" fill="#95A6AF"/>
<rect x="1065" y="321" width="4" height="1" fill="#95A6AF"/>
<rect x="1065" y="371" width="4" height="1" fill="#95A6AF"/>
<rect x="1065" y="424" width="4" height="1" fill="#95A6AF"/>
<rect x="1065" y="480" width="4" height="1" fill="#95A6AF"/>
</g>
<text x="1071" y="71.5" text-anchor="start" class="ax" >12.000</text>
<text x="1071" y="108.5" text-anchor="start" class="ax" >11.500</text>
<text x="1071" y="147.5" text-anchor="start" class="ax" >11.000</text>
<text x="1071" y="188.5" text-anchor="start" class="ax" >10.500</text>
<text x="1071" y="232" text-anchor="start" class="big" >10.000</text>
<text x="1071" y="276.5" text-anchor="start" class="ax" >9.500</text>
<text x="1071" y="324.5" text-anchor="start" class="ax" >9.000</text>
<text x="1071" y="374.5" text-anchor="start" class="ax" >8.500</text>
<text x="1071" y="427.5" text-anchor="start" class="ax" >8.000</text>
<text x="1071" y="483.5" text-anchor="start" class="ax" >7.500</text>
<g class="crisp">
<rect x="1069.5" y="278.5" width="45" height="15" fill="url(#gYel)" stroke="#A0A9AE"/>
<rect x="1069.5" y="293.5" width="45" height="14" fill="url(#gLab)" stroke="#A0A9AE"/>
<rect x="1065" y="286" width="4" height="1" fill="#000"/>
<rect x="1065" y="300" width="4" height="1" fill="#FFFF00"/>
</g>
<text x="1071" y="289.5" text-anchor="start" class="ax" >9.357,30</text>
<text x="1071" y="303.5" text-anchor="start" class="ax" style="fill:#FFFF00">9.209,40</text>
<g clip-path="url(#cpI1)">
<clipPath id="cpI1a"><rect x="5" y="495" width="1059" height="21.5"/></clipPath>
<clipPath id="cpI1b"><rect x="5" y="516.5" width="1059" height="64.5"/></clipPath>
<path d="M4.50,525.00 L10.50,526.75 L18.50,528.25 L26.50,529.50 L34.50,532.50 L42.50,544.25 L50.50,544.25 L58.50,537.50 L66.50,530.50 L74.50,527.50 L82.50,538.25 L90.50,542.50 L98.50,540.50 L106.50,539.25 L114.50,555.50 L122.50,542.00 L130.50,530.75 L138.50,526.75 L146.50,530.50 L154.50,530.50 L162.50,528.25 L170.50,518.75 L178.50,516.25 L186.50,515.00 L194.50,512.50 L202.50,504.50 L210.50,499.25 L218.50,501.25 L226.50,509.25 L234.50,511.25 L242.50,512.50 L250.50,512.50 L258.50,516.25 L266.50,510.50 L274.50,516.00 L282.50,518.00 L290.50,519.50 L298.50,523.00 L306.50,509.25 L314.50,522.00 L322.50,514.25 L330.50,509.25 L338.50,507.50 L346.50,514.25 L354.50,510.50 L362.50,521.25 L370.50,521.25 L378.50,521.25 L386.50,526.75 L394.50,535.50 L402.50,530.50 L410.50,536.25 L418.50,536.25 L426.50,523.25 L434.50,528.25 L442.50,527.50 L450.50,531.25 L458.50,531.25 L466.50,530.00 L474.50,534.50 L482.50,533.50 L490.50,540.50 L498.50,542.50 L506.50,538.75 L514.50,547.50 L522.50,548.75 L530.50,550.60 L539.50,556.25 L547.50,553.25 L555.50,554.25 L563.50,555.50 L571.50,572.00 L579.50,569.25 L587.50,567.25 L595.50,558.00 L603.50,552.25 L611.50,556.25 L619.50,561.25 L627.50,570.00 L635.50,571.25 L643.50,560.00 L651.50,549.25 L659.50,550.25 L667.50,558.25 L675.50,555.75 L683.50,553.50 L691.50,547.50 L699.50,555.75 L707.50,564.00 L715.50,564.50 L723.50,577.00 L731.50,568.50 L739.50,573.00 L747.50,564.25 L755.50,561.50 L763.50,560.50 L771.50,561.25 L779.50,554.50 L787.50,561.25 L795.50,551.25 L803.50,542.00 L811.50,530.75 L819.50,544.25 L827.50,540.25 L835.50,541.25 L843.50,543.25 L851.50,533.25 L859.50,522.50 L867.50,515.25 L875.50,522.00 L883.50,538.25 L891.50,540.50 L899.50,541.50 L907.50,539.50 L915.50,528.75 L923.50,518.50 L931.50,520.50 L939.50,516.50 L947.50,515.25 L955.50,514.25 L963.50,518.50 L971.50,516.50 L979.50,517.50 L987.50,520.50 L987.50,516.5 L4.50,516.5 Z" fill="#EDE969" fill-opacity="0.6" clip-path="url(#cpI1a)"/>
<path d="M4.50,525.00 L10.50,526.75 L18.50,528.25 L26.50,529.50 L34.50,532.50 L42.50,544.25 L50.50,544.25 L58.50,537.50 L66.50,530.50 L74.50,527.50 L82.50,538.25 L90.50,542.50 L98.50,540.50 L106.50,539.25 L114.50,555.50 L122.50,542.00 L130.50,530.75 L138.50,526.75 L146.50,530.50 L154.50,530.50 L162.50,528.25 L170.50,518.75 L178.50,516.25 L186.50,515.00 L194.50,512.50 L202.50,504.50 L210.50,499.25 L218.50,501.25 L226.50,509.25 L234.50,511.25 L242.50,512.50 L250.50,512.50 L258.50,516.25 L266.50,510.50 L274.50,516.00 L282.50,518.00 L290.50,519.50 L298.50,523.00 L306.50,509.25 L314.50,522.00 L322.50,514.25 L330.50,509.25 L338.50,507.50 L346.50,514.25 L354.50,510.50 L362.50,521.25 L370.50,521.25 L378.50,521.25 L386.50,526.75 L394.50,535.50 L402.50,530.50 L410.50,536.25 L418.50,536.25 L426.50,523.25 L434.50,528.25 L442.50,527.50 L450.50,531.25 L458.50,531.25 L466.50,530.00 L474.50,534.50 L482.50,533.50 L490.50,540.50 L498.50,542.50 L506.50,538.75 L514.50,547.50 L522.50,548.75 L530.50,550.60 L539.50,556.25 L547.50,553.25 L555.50,554.25 L563.50,555.50 L571.50,572.00 L579.50,569.25 L587.50,567.25 L595.50,558.00 L603.50,552.25 L611.50,556.25 L619.50,561.25 L627.50,570.00 L635.50,571.25 L643.50,560.00 L651.50,549.25 L659.50,550.25 L667.50,558.25 L675.50,555.75 L683.50,553.50 L691.50,547.50 L699.50,555.75 L707.50,564.00 L715.50,564.50 L723.50,577.00 L731.50,568.50 L739.50,573.00 L747.50,564.25 L755.50,561.50 L763.50,560.50 L771.50,561.25 L779.50,554.50 L787.50,561.25 L795.50,551.25 L803.50,542.00 L811.50,530.75 L819.50,544.25 L827.50,540.25 L835.50,541.25 L843.50,543.25 L851.50,533.25 L859.50,522.50 L867.50,515.25 L875.50,522.00 L883.50,538.25 L891.50,540.50 L899.50,541.50 L907.50,539.50 L915.50,528.75 L923.50,518.50 L931.50,520.50 L939.50,516.50 L947.50,515.25 L955.50,514.25 L963.50,518.50 L971.50,516.50 L979.50,517.50 L987.50,520.50 L987.50,516.5 L4.50,516.5 Z" fill="#6183D7" fill-opacity="0.6" clip-path="url(#cpI1b)"/>
<rect class="crisp" x="5" y="516" width="1059" height="1" fill="#2A2ACD"/>
<path d="M4.50,525.00 L10.50,526.75 L18.50,528.25 L26.50,529.50 L34.50,532.50 L42.50,544.25 L50.50,544.25 L58.50,537.50 L66.50,530.50 L74.50,527.50 L82.50,538.25 L90.50,542.50 L98.50,540.50 L106.50,539.25 L114.50,555.50 L122.50,542.00 L130.50,530.75 L138.50,526.75 L146.50,530.50 L154.50,530.50 L162.50,528.25 L170.50,518.75 L178.50,516.25 L186.50,515.00 L194.50,512.50 L202.50,504.50 L210.50,499.25 L218.50,501.25 L226.50,509.25 L234.50,511.25 L242.50,512.50 L250.50,512.50 L258.50,516.25 L266.50,510.50 L274.50,516.00 L282.50,518.00 L290.50,519.50 L298.50,523.00 L306.50,509.25 L314.50,522.00 L322.50,514.25 L330.50,509.25 L338.50,507.50 L346.50,514.25 L354.50,510.50 L362.50,521.25 L370.50,521.25 L378.50,521.25 L386.50,526.75 L394.50,535.50 L402.50,530.50 L410.50,536.25 L418.50,536.25 L426.50,523.25 L434.50,528.25 L442.50,527.50 L450.50,531.25 L458.50,531.25 L466.50,530.00 L474.50,534.50 L482.50,533.50 L490.50,540.50 L498.50,542.50 L506.50,538.75 L514.50,547.50 L522.50,548.75 L530.50,550.60 L539.50,556.25 L547.50,553.25 L555.50,554.25 L563.50,555.50 L571.50,572.00 L579.50,569.25 L587.50,567.25 L595.50,558.00 L603.50,552.25 L611.50,556.25 L619.50,561.25 L627.50,570.00 L635.50,571.25 L643.50,560.00 L651.50,549.25 L659.50,550.25 L667.50,558.25 L675.50,555.75 L683.50,553.50 L691.50,547.50 L699.50,555.75 L707.50,564.00 L715.50,564.50 L723.50,577.00 L731.50,568.50 L739.50,573.00 L747.50,564.25 L755.50,561.50 L763.50,560.50 L771.50,561.25 L779.50,554.50 L787.50,561.25 L795.50,551.25 L803.50,542.00 L811.50,530.75 L819.50,544.25 L827.50,540.25 L835.50,541.25 L843.50,543.25 L851.50,533.25 L859.50,522.50 L867.50,515.25 L875.50,522.00 L883.50,538.25 L891.50,540.50 L899.50,541.50 L907.50,539.50 L915.50,528.75 L923.50,518.50 L931.50,520.50 L939.50,516.50 L947.50,515.25 L955.50,514.25 L963.50,518.50 L971.50,516.50 L979.50,517.50 L987.50,520.50" fill="none" stroke="#111" stroke-width="1.1" stroke-linejoin="round"/>
</g>
<g class="crisp">
<rect x="1065" y="500" width="4" height="1" fill="#95A6AF"/>
<rect x="1065" y="533" width="4" height="1" fill="#95A6AF"/>
<rect x="1065" y="549" width="4" height="1" fill="#95A6AF"/>
<rect x="1065" y="565" width="4" height="1" fill="#95A6AF"/>
<rect x="1065" y="520" width="4" height="1" fill="#000"/>
</g>
<text x="1071" y="504.5" text-anchor="start" class="ax" >0,5</text>
<text x="1071" y="536.5" text-anchor="start" class="ax" >-0,5</text>
<text x="1071" y="552.5" text-anchor="start" class="ax" >-1</text>
<text x="1071" y="568.5" text-anchor="start" class="ax" >-1,5</text>
<text x="1071" y="519.5" text-anchor="start" class="ax" >0</text>
<rect class="crisp" x="1069.5" y="512.5" width="40" height="15" fill="url(#gLab)" stroke="#A0A9AE"/>
<text x="1071" y="523.5" text-anchor="start" class="ax" >-0,1125</text>
<g clip-path="url(#cpI2)">
<g opacity="0.6" shape-rendering="crispEdges">
<polygon points="4.50,606.10 10.50,609.70 10.50,603.50 4.50,602.80" fill="#858AE4"/>
<polygon points="10.50,609.70 18.50,615.20 18.50,605.60 10.50,603.50" fill="#858AE4"/>
<polygon points="18.50,615.20 26.50,617.20 26.50,608.40 18.50,605.60" fill="#858AE4"/>
<polygon points="26.50,617.20 34.50,619.00 34.50,610.70 26.50,608.40" fill="#858AE4"/>
<polygon points="34.50,619.00 42.50,621.00 42.50,612.70 34.50,610.70" fill="#858AE4"/>
<polygon points="42.50,621.00 50.50,622.40 50.50,614.20 42.50,612.70" fill="#858AE4"/>
<polygon points="50.50,622.40 58.50,620.70 58.50,615.40 50.50,614.20" fill="#858AE4"/>
<polygon points="58.50,620.70 66.50,617.80 66.50,616.00 58.50,615.40" fill="#858AE4"/>
<polygon points="66.50,617.80 70.01,616.18 66.50,616.00" fill="#858AE4"/>
<polygon points="70.01,616.18 74.50,614.10 74.50,616.40" fill="#EDE969"/>
<polygon points="74.50,614.10 81.31,616.66 74.50,616.40" fill="#EDE969"/>
<polygon points="81.31,616.66 82.50,617.10 82.50,616.70" fill="#858AE4"/>
<polygon points="82.50,617.10 90.50,617.80 90.50,617.00 82.50,616.70" fill="#858AE4"/>
<polygon points="90.50,617.80 98.50,618.10 98.50,617.40 90.50,617.00" fill="#858AE4"/>
<polygon points="98.50,618.10 106.50,619.50 106.50,618.10 98.50,617.40" fill="#858AE4"/>
<polygon points="106.50,619.50 114.50,623.50 114.50,619.00 106.50,618.10" fill="#858AE4"/>
<polygon points="114.50,623.50 122.50,626.40 122.50,619.80 114.50,619.00" fill="#858AE4"/>
<polygon points="122.50,626.40 130.50,623.80 130.50,620.40 122.50,619.80" fill="#858AE4"/>
<polygon points="130.50,623.80 138.50,622.10 138.50,620.70 130.50,620.40" fill="#858AE4"/>
<polygon points="138.50,622.10 145.97,620.51 138.50,620.70" fill="#858AE4"/>
<polygon points="145.97,620.51 146.50,620.40 146.50,620.50" fill="#EDE969"/>
<polygon points="146.50,620.40 154.50,617.80 154.50,620.00 146.50,620.50" fill="#EDE969"/>
<polygon points="154.50,617.80 162.50,613.25 162.50,618.75 154.50,620.00" fill="#EDE969"/>
<polygon points="162.50,613.25 170.50,608.75 170.50,616.25 162.50,618.75" fill="#EDE969"/>
<polygon points="170.50,608.75 178.50,606.25 178.50,614.25 170.50,616.25" fill="#EDE969"/>
<polygon points="178.50,606.25 186.50,603.75 186.50,612.50 178.50,614.25" fill="#EDE969"/>
<polygon points="186.50,603.75 194.50,600.00 194.50,610.00 186.50,612.50" fill="#EDE969"/>
<polygon points="194.50,600.00 202.50,597.00 202.50,607.00 194.50,610.00" fill="#EDE969"/>
<polygon points="202.50,597.00 210.50,593.00 210.50,603.75 202.50,607.00" fill="#EDE969"/>
<polygon points="210.50,593.00 218.50,589.25 218.50,600.75 210.50,603.75" fill="#EDE969"/>
<polygon points="218.50,589.25 226.50,590.50 226.50,598.75 218.50,600.75" fill="#EDE969"/>
<polygon points="226.50,590.50 234.50,589.50 234.50,597.00 226.50,598.75" fill="#EDE969"/>
<polygon points="234.50,589.50 242.50,590.50 242.50,595.50 234.50,597.00" fill="#EDE969"/>
<polygon points="242.50,590.50 250.50,591.25 250.50,594.50 242.50,595.50" fill="#EDE969"/>
<polygon points="250.50,591.25 258.50,592.00 258.50,593.75 250.50,594.50" fill="#EDE969"/>
<polygon points="258.50,592.00 266.50,592.00 266.50,593.50 258.50,593.75" fill="#EDE969"/>
<polygon points="266.50,592.00 271.30,593.80 266.50,593.50" fill="#EDE969"/>
<polygon points="271.30,593.80 274.50,595.00 274.50,594.00" fill="#858AE4"/>
<polygon points="274.50,595.00 282.50,598.25 282.50,595.00 274.50,594.00" fill="#858AE4"/>
<polygon points="282.50,598.25 290.50,602.00 290.50,596.75 282.50,595.00" fill="#858AE4"/>
<polygon points="290.50,602.00 298.50,605.00 298.50,598.25 290.50,596.75" fill="#858AE4"/>
<polygon points="298.50,605.00 306.50,604.25 306.50,599.50 298.50,598.25" fill="#858AE4"/>
<polygon points="306.50,604.25 314.50,608.75 314.50,601.50 306.50,599.50" fill="#858AE4"/>
<polygon points="314.50,608.75 322.50,610.00 322.50,603.25 314.50,601.50" fill="#858AE4"/>
<polygon points="322.50,610.00 330.50,608.25 330.50,604.25 322.50,603.25" fill="#858AE4"/>
<polygon points="330.50,608.25 338.50,608.25 338.50,605.25 330.50,604.25" fill="#858AE4"/>
<polygon points="338.50,608.25 346.50,609.00 346.50,606.00 338.50,605.25" fill="#858AE4"/>
<polygon points="346.50,609.00 354.50,609.00 354.50,606.25 346.50,606.00" fill="#858AE4"/>
<polygon points="354.50,609.00 362.50,612.50 362.50,607.50 354.50,606.25" fill="#858AE4"/>
<polygon points="362.50,612.50 370.50,620.00 370.50,610.00 362.50,607.50" fill="#858AE4"/>
<polygon points="370.50,620.00 378.50,626.25 378.50,613.00 370.50,610.00" fill="#858AE4"/>
<polygon points="378.50,626.25 386.50,633.75 386.50,617.00 378.50,613.00" fill="#858AE4"/>
<polygon points="386.50,633.75 394.50,639.50 394.50,621.75 386.50,617.00" fill="#858AE4"/>
<polygon points="394.50,639.50 402.50,643.25 402.50,626.25 394.50,621.75" fill="#858AE4"/>
<polygon points="402.50,643.25 410.50,648.25 410.50,630.75 402.50,626.25" fill="#858AE4"/>
<polygon points="410.50,648.25 418.50,651.25 418.50,634.50 410.50,630.75" fill="#858AE4"/>
<polygon points="418.50,651.25 426.50,648.75 426.50,637.00 418.50,634.50" fill="#858AE4"/>
<polygon points="426.50,648.75 434.50,645.50 434.50,638.50 426.50,637.00" fill="#858AE4"/>
<polygon points="434.50,645.50 442.50,641.25 442.50,639.25 434.50,638.50" fill="#858AE4"/>
<polygon points="442.50,641.25 448.90,639.25 442.50,639.25" fill="#858AE4"/>
<polygon points="448.90,639.25 450.50,638.75 450.50,639.25" fill="#EDE969"/>
<polygon points="450.50,638.75 458.50,635.75 458.50,638.00 450.50,639.25" fill="#EDE969"/>
<polygon points="458.50,635.75 466.50,635.75 466.50,637.75 458.50,638.00" fill="#EDE969"/>
<polygon points="466.50,635.75 474.50,635.00 474.50,637.00 466.50,637.75" fill="#EDE969"/>
<polygon points="474.50,635.00 482.50,633.00 482.50,636.00 474.50,637.00" fill="#EDE969"/>
<polygon points="482.50,633.00 490.50,633.75 490.50,635.75 482.50,636.00" fill="#EDE969"/>
<polygon points="490.50,633.75 495.83,636.25 490.50,635.75" fill="#EDE969"/>
<polygon points="495.83,636.25 498.50,637.50 498.50,636.50" fill="#858AE4"/>
<polygon points="498.50,637.50 506.50,639.50 506.50,637.50 498.50,636.50" fill="#858AE4"/>
<polygon points="506.50,639.50 514.50,640.50 514.50,638.25 506.50,637.50" fill="#858AE4"/>
<polygon points="514.50,640.50 522.50,643.00 522.50,639.50 514.50,638.25" fill="#858AE4"/>
<polygon points="522.50,643.00 530.50,648.75 530.50,641.50 522.50,639.50" fill="#858AE4"/>
<polygon points="530.50,648.75 539.50,655.25 539.50,644.50 530.50,641.50" fill="#858AE4"/>
<polygon points="539.50,655.25 547.50,659.25 547.50,647.00 539.50,644.50" fill="#858AE4"/>
<polygon points="547.50,659.25 555.50,662.00 555.50,650.00 547.50,647.00" fill="#858AE4"/>
<polygon points="555.50,662.00 563.50,665.75 563.50,653.00 555.50,650.00" fill="#858AE4"/>
<polygon points="563.50,665.75 571.50,670.50 571.50,656.75 563.50,653.00" fill="#858AE4"/>
<polygon points="571.50,670.50 579.50,673.25 579.50,660.00 571.50,656.75" fill="#858AE4"/>
<polygon points="579.50,673.25 587.50,672.75 587.50,662.50 579.50,660.00" fill="#858AE4"/>
<polygon points="587.50,672.75 595.50,668.25 595.50,663.00 587.50,662.50" fill="#858AE4"/>
<polygon points="595.50,668.25 602.80,663.00 595.50,663.00" fill="#858AE4"/>
<polygon points="602.80,663.00 603.50,662.50 603.50,663.00" fill="#EDE969"/>
<polygon points="603.50,662.50 611.50,658.00 611.50,662.50 603.50,663.00" fill="#EDE969"/>
<polygon points="611.50,658.00 619.50,656.00 619.50,661.25 611.50,662.50" fill="#EDE969"/>
<polygon points="619.50,656.00 627.50,655.00 627.50,660.00 619.50,661.25" fill="#EDE969"/>
<polygon points="627.50,655.00 635.50,655.00 635.50,659.00 627.50,660.00" fill="#EDE969"/>
<polygon points="635.50,655.00 643.50,651.25 643.50,657.00 635.50,659.00" fill="#EDE969"/>
<polygon points="643.50,651.25 651.50,645.50 651.50,654.50 643.50,657.00" fill="#EDE969"/>
<polygon points="651.50,645.50 659.50,642.00 659.50,652.00 651.50,654.50" fill="#EDE969"/>
<polygon points="659.50,642.00 667.50,642.00 667.50,650.00 659.50,652.00" fill="#EDE969"/>
<polygon points="667.50,642.00 675.50,640.50 675.50,648.25 667.50,650.00" fill="#EDE969"/>
<polygon points="675.50,640.50 683.50,638.75 683.50,647.00 675.50,648.25" fill="#EDE969"/>
<polygon points="683.50,638.75 691.50,635.75 691.50,644.25 683.50,647.00" fill="#EDE969"/>
<polygon points="691.50,635.75 699.50,635.00 699.50,642.25 691.50,644.25" fill="#EDE969"/>
<polygon points="699.50,635.00 707.50,636.25 707.50,641.25 699.50,642.25" fill="#EDE969"/>
<polygon points="707.50,636.25 715.50,638.00 715.50,641.00 707.50,641.25" fill="#EDE969"/>
<polygon points="715.50,638.00 720.30,641.45 715.50,641.00" fill="#EDE969"/>
<polygon points="720.30,641.45 723.50,643.75 723.50,641.75" fill="#858AE4"/>
<polygon points="723.50,643.75 731.50,644.25 731.50,642.25 723.50,641.75" fill="#858AE4"/>
<polygon points="731.50,644.25 739.50,645.25 739.50,642.75 731.50,642.25" fill="#858AE4"/>
<polygon points="739.50,645.25 745.65,642.75 739.50,642.75" fill="#858AE4"/>
<polygon points="745.65,642.75 747.50,642.00 747.50,642.75" fill="#EDE969"/>
<polygon points="747.50,642.00 755.50,640.00 755.50,642.50 747.50,642.75" fill="#EDE969"/>
<polygon points="755.50,640.00 763.50,637.50 763.50,641.50 755.50,642.50" fill="#EDE969"/>
<polygon points="763.50,637.50 771.50,636.25 771.50,640.50 763.50,641.50" fill="#EDE969"/>
<polygon points="771.50,636.25 779.50,633.25 779.50,639.00 771.50,640.50" fill="#EDE969"/>
<polygon points="779.50,633.25 787.50,632.00 787.50,637.50 779.50,639.00" fill="#EDE969"/>
<polygon points="787.50,632.00 795.50,630.00 795.50,636.00 787.50,637.50" fill="#EDE969"/>
<polygon points="795.50,630.00 803.50,627.00 803.50,634.00 795.50,636.00" fill="#EDE969"/>
<polygon points="803.50,627.00 811.50,623.50 811.50,631.75 803.50,634.00" fill="#EDE969"/>
<polygon points="811.50,623.50 819.50,623.25 819.50,630.00 811.50,631.75" fill="#EDE969"/>
<polygon points="819.50,623.25 827.50,621.25 827.50,628.25 819.50,630.00" fill="#EDE969"/>
<polygon points="827.50,621.25 835.50,620.25 835.50,627.00 827.50,628.25" fill="#EDE969"/>
<polygon points="835.50,620.25 843.50,620.25 843.50,625.25 835.50,627.00" fill="#EDE969"/>
<polygon points="843.50,620.25 851.50,620.00 851.50,624.25 843.50,625.25" fill="#EDE969"/>
<polygon points="851.50,620.00 859.50,616.25 859.50,623.00 851.50,624.25" fill="#EDE969"/>
<polygon points="859.50,616.25 867.50,613.25 867.50,621.00 859.50,623.00" fill="#EDE969"/>
<polygon points="867.50,613.25 875.50,614.00 875.50,619.25 867.50,621.00" fill="#EDE969"/>
<polygon points="875.50,614.00 883.50,615.00 883.50,619.00 875.50,619.25" fill="#EDE969"/>
<polygon points="883.50,615.00 891.50,617.00 891.50,618.25 883.50,619.00" fill="#EDE969"/>
<polygon points="891.50,617.00 899.50,618.25 899.50,618.25 891.50,618.25" fill="#EDE969"/>
<polygon points="899.50,618.25 907.50,619.25 907.50,618.50 899.50,618.25" fill="#858AE4"/>
<polygon points="907.50,619.25 909.10,618.40 907.50,618.50" fill="#858AE4"/>
<polygon points="909.10,618.40 915.50,615.00 915.50,618.00" fill="#EDE969"/>
<polygon points="915.50,615.00 923.50,611.00 923.50,616.50 915.50,618.00" fill="#EDE969"/>
<polygon points="923.50,611.00 931.50,607.75 931.50,615.00 923.50,616.50" fill="#EDE969"/>
<polygon points="931.50,607.75 939.50,605.00 939.50,613.00 931.50,615.00" fill="#EDE969"/>
<polygon points="939.50,605.00 947.50,603.00 947.50,611.00 939.50,613.00" fill="#EDE969"/>
<polygon points="947.50,603.00 955.50,601.25 955.50,609.00 947.50,611.00" fill="#EDE969"/>
<polygon points="955.50,601.25 963.50,600.00 963.50,607.00 955.50,609.00" fill="#EDE969"/>
<polygon points="963.50,600.00 971.50,599.25 971.50,605.50 963.50,607.00" fill="#EDE969"/>
<polygon points="971.50,599.25 979.50,599.25 979.50,604.50 971.50,605.50" fill="#EDE969"/>
<polygon points="979.50,599.25 987.50,600.50 987.50,603.50 979.50,604.50" fill="#EDE969"/>
</g>
<defs><linearGradient id="gHB" x1="0" y1="0" x2="1" y2="0"><stop offset="0" stop-color="#5A8CFF"/><stop offset="1" stop-color="#1E58FF"/></linearGradient><linearGradient id="gHY" x1="0" y1="0" x2="1" y2="0"><stop offset="0" stop-color="#FFFF50"/><stop offset="1" stop-color="#F4F400"/></linearGradient></defs>
<g class="crisp">
<rect x="7" y="618" width="6" height="6" fill="#1A3CE0"/>
<rect x="8" y="618" width="4" height="5" fill="url(#gHB)"/>
<rect x="15" y="618" width="6" height="9" fill="#1A3CE0"/>
<rect x="16" y="618" width="4" height="8" fill="url(#gHB)"/>
<rect x="23" y="618" width="6" height="9" fill="#1A3CE0"/>
<rect x="24" y="618" width="4" height="8" fill="url(#gHB)"/>
<rect x="31" y="618" width="6" height="7" fill="#1A3CE0"/>
<rect x="32" y="618" width="4" height="6" fill="url(#gHB)"/>
<rect x="39" y="618" width="6" height="8" fill="#1A3CE0"/>
<rect x="40" y="618" width="4" height="7" fill="url(#gHB)"/>
<rect x="47" y="618" width="6" height="8" fill="#1A3CE0"/>
<rect x="48" y="618" width="4" height="7" fill="url(#gHB)"/>
<rect x="55" y="618" width="6" height="5" fill="#1A3CE0"/>
<rect x="56" y="618" width="4" height="4" fill="url(#gHB)"/>
<rect x="63" y="618" width="6" height="2" fill="#1A3CE0"/>
<rect x="64" y="618" width="4" height="1" fill="url(#gHB)"/>
<rect x="71" y="615" width="6" height="2" fill="#C4C400"/>
<rect x="72" y="616" width="4" height="1" fill="url(#gHY)"/>
<rect x="79" y="618" width="6" height="2" fill="#1A3CE0"/>
<rect x="80" y="618" width="4" height="1" fill="url(#gHB)"/>
<rect x="87" y="618" width="6" height="1" fill="#1A3CE0"/>
<rect x="103" y="618" width="6" height="2" fill="#1A3CE0"/>
<rect x="104" y="618" width="4" height="1" fill="url(#gHB)"/>
<rect x="111" y="618" width="6" height="6" fill="#1A3CE0"/>
<rect x="112" y="618" width="4" height="5" fill="url(#gHB)"/>
<rect x="119" y="618" width="6" height="6" fill="#1A3CE0"/>
<rect x="120" y="618" width="4" height="5" fill="url(#gHB)"/>
<rect x="127" y="618" width="6" height="2" fill="#1A3CE0"/>
<rect x="128" y="618" width="4" height="1" fill="url(#gHB)"/>
<rect x="135" y="618" width="6" height="1" fill="#1A3CE0"/>
<rect x="143" y="616" width="6" height="1" fill="#C4C400"/>
<rect x="151" y="614" width="6" height="3" fill="#C4C400"/>
<rect x="152" y="615" width="4" height="2" fill="url(#gHY)"/>
<rect x="159" y="611" width="6" height="6" fill="#C4C400"/>
<rect x="160" y="612" width="4" height="5" fill="url(#gHY)"/>
<rect x="167" y="609" width="6" height="8" fill="#C4C400"/>
<rect x="168" y="610" width="4" height="7" fill="url(#gHY)"/>
<rect x="175" y="608" width="6" height="9" fill="#C4C400"/>
<rect x="176" y="609" width="4" height="8" fill="url(#gHY)"/>
<rect x="183" y="608" width="6" height="9" fill="#C4C400"/>
<rect x="184" y="609" width="4" height="8" fill="url(#gHY)"/>
<rect x="191" y="606" width="6" height="11" fill="#C4C400"/>
<rect x="192" y="607" width="4" height="10" fill="url(#gHY)"/>
<rect x="199" y="606" width="6" height="11" fill="#C4C400"/>
<rect x="200" y="607" width="4" height="10" fill="url(#gHY)"/>
<rect x="207" y="606" width="6" height="11" fill="#C4C400"/>
<rect x="208" y="607" width="4" height="10" fill="url(#gHY)"/>
<rect x="215" y="605" width="6" height="12" fill="#C4C400"/>
<rect x="216" y="606" width="4" height="11" fill="url(#gHY)"/>
<rect x="223" y="608" width="6" height="9" fill="#C4C400"/>
<rect x="224" y="609" width="4" height="8" fill="url(#gHY)"/>
<rect x="231" y="609" width="6" height="8" fill="#C4C400"/>
<rect x="232" y="610" width="4" height="7" fill="url(#gHY)"/>
<rect x="239" y="611" width="6" height="6" fill="#C4C400"/>
<rect x="240" y="612" width="4" height="5" fill="url(#gHY)"/>
<rect x="247" y="613" width="6" height="4" fill="#C4C400"/>
<rect x="248" y="614" width="4" height="3" fill="url(#gHY)"/>
<rect x="255" y="615" width="6" height="2" fill="#C4C400"/>
<rect x="256" y="616" width="4" height="1" fill="url(#gHY)"/>
<rect x="263" y="615" width="6" height="2" fill="#C4C400"/>
<rect x="264" y="616" width="4" height="1" fill="url(#gHY)"/>
<rect x="271" y="618" width="6" height="1" fill="#1A3CE0"/>
<rect x="279" y="618" width="6" height="3" fill="#1A3CE0"/>
<rect x="280" y="618" width="4" height="2" fill="url(#gHB)"/>
<rect x="287" y="618" width="6" height="5" fill="#1A3CE0"/>
<rect x="288" y="618" width="4" height="4" fill="url(#gHB)"/>
<rect x="295" y="618" width="6" height="7" fill="#1A3CE0"/>
<rect x="296" y="618" width="4" height="6" fill="url(#gHB)"/>
<rect x="303" y="618" width="6" height="5" fill="#1A3CE0"/>
<rect x="304" y="618" width="4" height="4" fill="url(#gHB)"/>
<rect x="311" y="618" width="6" height="7" fill="#1A3CE0"/>
<rect x="312" y="618" width="4" height="6" fill="url(#gHB)"/>
<rect x="319" y="618" width="6" height="7" fill="#1A3CE0"/>
<rect x="320" y="618" width="4" height="6" fill="url(#gHB)"/>
<rect x="327" y="618" width="6" height="4" fill="#1A3CE0"/>
<rect x="328" y="618" width="4" height="3" fill="url(#gHB)"/>
<rect x="335" y="618" width="6" height="3" fill="#1A3CE0"/>
<rect x="336" y="618" width="4" height="2" fill="url(#gHB)"/>
<rect x="343" y="618" width="6" height="3" fill="#1A3CE0"/>
<rect x="344" y="618" width="4" height="2" fill="url(#gHB)"/>
<rect x="351" y="618" width="6" height="3" fill="#1A3CE0"/>
<rect x="352" y="618" width="4" height="2" fill="url(#gHB)"/>
<rect x="359" y="618" width="6" height="5" fill="#1A3CE0"/>
<rect x="360" y="618" width="4" height="4" fill="url(#gHB)"/>
<rect x="367" y="618" width="6" height="10" fill="#1A3CE0"/>
<rect x="368" y="618" width="4" height="9" fill="url(#gHB)"/>
<rect x="375" y="618" width="6" height="13" fill="#1A3CE0"/>
<rect x="376" y="618" width="4" height="12" fill="url(#gHB)"/>
<rect x="383" y="618" width="6" height="17" fill="#1A3CE0"/>
<rect x="384" y="618" width="4" height="16" fill="url(#gHB)"/>
<rect x="391" y="618" width="6" height="18" fill="#1A3CE0"/>
<rect x="392" y="618" width="4" height="17" fill="url(#gHB)"/>
<rect x="399" y="618" width="6" height="17" fill="#1A3CE0"/>
<rect x="400" y="618" width="4" height="16" fill="url(#gHB)"/>
<rect x="407" y="618" width="6" height="18" fill="#1A3CE0"/>
<rect x="408" y="618" width="4" height="17" fill="url(#gHB)"/>
<rect x="415" y="618" width="6" height="17" fill="#1A3CE0"/>
<rect x="416" y="618" width="4" height="16" fill="url(#gHB)"/>
<rect x="423" y="618" width="6" height="12" fill="#1A3CE0"/>
<rect x="424" y="618" width="4" height="11" fill="url(#gHB)"/>
<rect x="431" y="618" width="6" height="7" fill="#1A3CE0"/>
<rect x="432" y="618" width="4" height="6" fill="url(#gHB)"/>
<rect x="439" y="618" width="6" height="2" fill="#1A3CE0"/>
<rect x="440" y="618" width="4" height="1" fill="url(#gHB)"/>
<rect x="447" y="616" width="6" height="1" fill="#C4C400"/>
<rect x="455" y="614" width="6" height="3" fill="#C4C400"/>
<rect x="456" y="615" width="4" height="2" fill="url(#gHY)"/>
<rect x="463" y="614" width="6" height="3" fill="#C4C400"/>
<rect x="464" y="615" width="4" height="2" fill="url(#gHY)"/>
<rect x="471" y="614" width="6" height="3" fill="#C4C400"/>
<rect x="472" y="615" width="4" height="2" fill="url(#gHY)"/>
<rect x="479" y="613" width="6" height="4" fill="#C4C400"/>
<rect x="480" y="614" width="4" height="3" fill="url(#gHY)"/>
<rect x="487" y="614" width="6" height="3" fill="#C4C400"/>
<rect x="488" y="615" width="4" height="2" fill="url(#gHY)"/>
<rect x="495" y="618" width="6" height="1" fill="#1A3CE0"/>
<rect x="503" y="618" width="6" height="2" fill="#1A3CE0"/>
<rect x="504" y="618" width="4" height="1" fill="url(#gHB)"/>
<rect x="511" y="618" width="6" height="2" fill="#1A3CE0"/>
<rect x="512" y="618" width="4" height="1" fill="url(#gHB)"/>
<rect x="519" y="618" width="6" height="4" fill="#1A3CE0"/>
<rect x="520" y="618" width="4" height="3" fill="url(#gHB)"/>
<rect x="527" y="618" width="6" height="7" fill="#1A3CE0"/>
<rect x="528" y="618" width="4" height="6" fill="url(#gHB)"/>
<rect x="536" y="618" width="6" height="11" fill="#1A3CE0"/>
<rect x="537" y="618" width="4" height="10" fill="url(#gHB)"/>
<rect x="544" y="618" width="6" height="12" fill="#1A3CE0"/>
<rect x="545" y="618" width="4" height="11" fill="url(#gHB)"/>
<rect x="552" y="618" width="6" height="12" fill="#1A3CE0"/>
<rect x="553" y="618" width="4" height="11" fill="url(#gHB)"/>
<rect x="560" y="618" width="6" height="13" fill="#1A3CE0"/>
<rect x="561" y="618" width="4" height="12" fill="url(#gHB)"/>
<rect x="568" y="618" width="6" height="14" fill="#1A3CE0"/>
<rect x="569" y="618" width="4" height="13" fill="url(#gHB)"/>
<rect x="576" y="618" width="6" height="13" fill="#1A3CE0"/>
<rect x="577" y="618" width="4" height="12" fill="url(#gHB)"/>
<rect x="584" y="618" width="6" height="10" fill="#1A3CE0"/>
<rect x="585" y="618" width="4" height="9" fill="url(#gHB)"/>
<rect x="592" y="618" width="6" height="5" fill="#1A3CE0"/>
<rect x="593" y="618" width="4" height="4" fill="url(#gHB)"/>
<rect x="600" y="616" width="6" height="1" fill="#C4C400"/>
<rect x="608" y="612" width="6" height="5" fill="#C4C400"/>
<rect x="609" y="613" width="4" height="4" fill="url(#gHY)"/>
<rect x="616" y="611" width="6" height="6" fill="#C4C400"/>
<rect x="617" y="612" width="4" height="5" fill="url(#gHY)"/>
<rect x="624" y="611" width="6" height="6" fill="#C4C400"/>
<rect x="625" y="612" width="4" height="5" fill="url(#gHY)"/>
<rect x="632" y="612" width="6" height="5" fill="#C4C400"/>
<rect x="633" y="613" width="4" height="4" fill="url(#gHY)"/>
<rect x="640" y="611" width="6" height="6" fill="#C4C400"/>
<rect x="641" y="612" width="4" height="5" fill="url(#gHY)"/>
<rect x="648" y="607" width="6" height="10" fill="#C4C400"/>
<rect x="649" y="608" width="4" height="9" fill="url(#gHY)"/>
<rect x="656" y="606" width="6" height="11" fill="#C4C400"/>
<rect x="657" y="607" width="4" height="10" fill="url(#gHY)"/>
<rect x="664" y="608" width="6" height="9" fill="#C4C400"/>
<rect x="665" y="609" width="4" height="8" fill="url(#gHY)"/>
<rect x="672" y="609" width="6" height="8" fill="#C4C400"/>
<rect x="673" y="610" width="4" height="7" fill="url(#gHY)"/>
<rect x="680" y="608" width="6" height="9" fill="#C4C400"/>
<rect x="681" y="609" width="4" height="8" fill="url(#gHY)"/>
<rect x="688" y="608" width="6" height="9" fill="#C4C400"/>
<rect x="689" y="609" width="4" height="8" fill="url(#gHY)"/>
<rect x="696" y="609" width="6" height="8" fill="#C4C400"/>
<rect x="697" y="610" width="4" height="7" fill="url(#gHY)"/>
<rect x="704" y="611" width="6" height="6" fill="#C4C400"/>
<rect x="705" y="612" width="4" height="5" fill="url(#gHY)"/>
<rect x="712" y="613" width="6" height="4" fill="#C4C400"/>
<rect x="713" y="614" width="4" height="3" fill="url(#gHY)"/>
<rect x="720" y="618" width="6" height="2" fill="#1A3CE0"/>
<rect x="721" y="618" width="4" height="1" fill="url(#gHB)"/>
<rect x="728" y="618" width="6" height="2" fill="#1A3CE0"/>
<rect x="729" y="618" width="4" height="1" fill="url(#gHB)"/>
<rect x="736" y="618" width="6" height="3" fill="#1A3CE0"/>
<rect x="737" y="618" width="4" height="2" fill="url(#gHB)"/>
<rect x="744" y="616" width="6" height="1" fill="#C4C400"/>
<rect x="752" y="614" width="6" height="3" fill="#C4C400"/>
<rect x="753" y="615" width="4" height="2" fill="url(#gHY)"/>
<rect x="760" y="612" width="6" height="5" fill="#C4C400"/>
<rect x="761" y="613" width="4" height="4" fill="url(#gHY)"/>
<rect x="768" y="612" width="6" height="5" fill="#C4C400"/>
<rect x="769" y="613" width="4" height="4" fill="url(#gHY)"/>
<rect x="776" y="611" width="6" height="6" fill="#C4C400"/>
<rect x="777" y="612" width="4" height="5" fill="url(#gHY)"/>
<rect x="784" y="611" width="6" height="6" fill="#C4C400"/>
<rect x="785" y="612" width="4" height="5" fill="url(#gHY)"/>
<rect x="792" y="610" width="6" height="7" fill="#C4C400"/>
<rect x="793" y="611" width="4" height="6" fill="url(#gHY)"/>
<rect x="800" y="609" width="6" height="8" fill="#C4C400"/>
<rect x="801" y="610" width="4" height="7" fill="url(#gHY)"/>
<rect x="808" y="608" width="6" height="9" fill="#C4C400"/>
<rect x="809" y="609" width="4" height="8" fill="url(#gHY)"/>
<rect x="816" y="610" width="6" height="7" fill="#C4C400"/>
<rect x="817" y="611" width="4" height="6" fill="url(#gHY)"/>
<rect x="824" y="609" width="6" height="8" fill="#C4C400"/>
<rect x="825" y="610" width="4" height="7" fill="url(#gHY)"/>
<rect x="832" y="610" width="6" height="7" fill="#C4C400"/>
<rect x="833" y="611" width="4" height="6" fill="url(#gHY)"/>
<rect x="840" y="611" width="6" height="6" fill="#C4C400"/>
<rect x="841" y="612" width="4" height="5" fill="url(#gHY)"/>
<rect x="848" y="612" width="6" height="5" fill="#C4C400"/>
<rect x="849" y="613" width="4" height="4" fill="url(#gHY)"/>
<rect x="856" y="610" width="6" height="7" fill="#C4C400"/>
<rect x="857" y="611" width="4" height="6" fill="url(#gHY)"/>
<rect x="864" y="609" width="6" height="8" fill="#C4C400"/>
<rect x="865" y="610" width="4" height="7" fill="url(#gHY)"/>
<rect x="872" y="611" width="6" height="6" fill="#C4C400"/>
<rect x="873" y="612" width="4" height="5" fill="url(#gHY)"/>
<rect x="880" y="612" width="6" height="5" fill="#C4C400"/>
<rect x="881" y="613" width="4" height="4" fill="url(#gHY)"/>
<rect x="888" y="615" width="6" height="2" fill="#C4C400"/>
<rect x="889" y="616" width="4" height="1" fill="url(#gHY)"/>
<rect x="904" y="618" width="6" height="1" fill="#1A3CE0"/>
<rect x="912" y="613" width="6" height="4" fill="#C4C400"/>
<rect x="913" y="614" width="4" height="3" fill="url(#gHY)"/>
<rect x="920" y="611" width="6" height="6" fill="#C4C400"/>
<rect x="921" y="612" width="4" height="5" fill="url(#gHY)"/>
<rect x="928" y="609" width="6" height="8" fill="#C4C400"/>
<rect x="929" y="610" width="4" height="7" fill="url(#gHY)"/>
<rect x="936" y="608" width="6" height="9" fill="#C4C400"/>
<rect x="937" y="609" width="4" height="8" fill="url(#gHY)"/>
<rect x="944" y="608" width="6" height="9" fill="#C4C400"/>
<rect x="945" y="609" width="4" height="8" fill="url(#gHY)"/>
<rect x="952" y="609" width="6" height="8" fill="#C4C400"/>
<rect x="953" y="610" width="4" height="7" fill="url(#gHY)"/>
<rect x="960" y="609" width="6" height="8" fill="#C4C400"/>
<rect x="961" y="610" width="4" height="7" fill="url(#gHY)"/>
<rect x="968" y="610" width="6" height="7" fill="#C4C400"/>
<rect x="969" y="611" width="4" height="6" fill="url(#gHY)"/>
<rect x="976" y="611" width="6" height="6" fill="#C4C400"/>
<rect x="977" y="612" width="4" height="5" fill="url(#gHY)"/>
<rect x="984" y="613" width="6" height="4" fill="#C4C400"/>
<rect x="985" y="614" width="4" height="3" fill="url(#gHY)"/>
<rect x="5" y="617" width="1059" height="1" fill="#3030D8"/>
</g>
<path d="M4.50,602.80 L10.50,603.50 L18.50,605.60 L26.50,608.40 L34.50,610.70 L42.50,612.70 L50.50,614.20 L58.50,615.40 L66.50,616.00 L74.50,616.40 L82.50,616.70 L90.50,617.00 L98.50,617.40 L106.50,618.10 L114.50,619.00 L122.50,619.80 L130.50,620.40 L138.50,620.70 L146.50,620.50 L154.50,620.00 L162.50,618.75 L170.50,616.25 L178.50,614.25 L186.50,612.50 L194.50,610.00 L202.50,607.00 L210.50,603.75 L218.50,600.75 L226.50,598.75 L234.50,597.00 L242.50,595.50 L250.50,594.50 L258.50,593.75 L266.50,593.50 L274.50,594.00 L282.50,595.00 L290.50,596.75 L298.50,598.25 L306.50,599.50 L314.50,601.50 L322.50,603.25 L330.50,604.25 L338.50,605.25 L346.50,606.00 L354.50,606.25 L362.50,607.50 L370.50,610.00 L378.50,613.00 L386.50,617.00 L394.50,621.75 L402.50,626.25 L410.50,630.75 L418.50,634.50 L426.50,637.00 L434.50,638.50 L442.50,639.25 L450.50,639.25 L458.50,638.00 L466.50,637.75 L474.50,637.00 L482.50,636.00 L490.50,635.75 L498.50,636.50 L506.50,637.50 L514.50,638.25 L522.50,639.50 L530.50,641.50 L539.50,644.50 L547.50,647.00 L555.50,650.00 L563.50,653.00 L571.50,656.75 L579.50,660.00 L587.50,662.50 L595.50,663.00 L603.50,663.00 L611.50,662.50 L619.50,661.25 L627.50,660.00 L635.50,659.00 L643.50,657.00 L651.50,654.50 L659.50,652.00 L667.50,650.00 L675.50,648.25 L683.50,647.00 L691.50,644.25 L699.50,642.25 L707.50,641.25 L715.50,641.00 L723.50,641.75 L731.50,642.25 L739.50,642.75 L747.50,642.75 L755.50,642.50 L763.50,641.50 L771.50,640.50 L779.50,639.00 L787.50,637.50 L795.50,636.00 L803.50,634.00 L811.50,631.75 L819.50,630.00 L827.50,628.25 L835.50,627.00 L843.50,625.25 L851.50,624.25 L859.50,623.00 L867.50,621.00 L875.50,619.25 L883.50,619.00 L891.50,618.25 L899.50,618.25 L907.50,618.50 L915.50,618.00 L923.50,616.50 L931.50,615.00 L939.50,613.00 L947.50,611.00 L955.50,609.00 L963.50,607.00 L971.50,605.50 L979.50,604.50 L987.50,603.50" fill="none" stroke="#1E96FF" stroke-width="1.5" stroke-linejoin="round"/>
<path d="M4.50,606.10 L10.50,609.70 L18.50,615.20 L26.50,617.20 L34.50,619.00 L42.50,621.00 L50.50,622.40 L58.50,620.70 L66.50,617.80 L74.50,614.10 L82.50,617.10 L90.50,617.80 L98.50,618.10 L106.50,619.50 L114.50,623.50 L122.50,626.40 L130.50,623.80 L138.50,622.10 L146.50,620.40 L154.50,617.80 L162.50,613.25 L170.50,608.75 L178.50,606.25 L186.50,603.75 L194.50,600.00 L202.50,597.00 L210.50,593.00 L218.50,589.25 L226.50,590.50 L234.50,589.50 L242.50,590.50 L250.50,591.25 L258.50,592.00 L266.50,592.00 L274.50,595.00 L282.50,598.25 L290.50,602.00 L298.50,605.00 L306.50,604.25 L314.50,608.75 L322.50,610.00 L330.50,608.25 L338.50,608.25 L346.50,609.00 L354.50,609.00 L362.50,612.50 L370.50,620.00 L378.50,626.25 L386.50,633.75 L394.50,639.50 L402.50,643.25 L410.50,648.25 L418.50,651.25 L426.50,648.75 L434.50,645.50 L442.50,641.25 L450.50,638.75 L458.50,635.75 L466.50,635.75 L474.50,635.00 L482.50,633.00 L490.50,633.75 L498.50,637.50 L506.50,639.50 L514.50,640.50 L522.50,643.00 L530.50,648.75 L539.50,655.25 L547.50,659.25 L555.50,662.00 L563.50,665.75 L571.50,670.50 L579.50,673.25 L587.50,672.75 L595.50,668.25 L603.50,662.50 L611.50,658.00 L619.50,656.00 L627.50,655.00 L635.50,655.00 L643.50,651.25 L651.50,645.50 L659.50,642.00 L667.50,642.00 L675.50,640.50 L683.50,638.75 L691.50,635.75 L699.50,635.00 L707.50,636.25 L715.50,638.00 L723.50,643.75 L731.50,644.25 L739.50,645.25 L747.50,642.00 L755.50,640.00 L763.50,637.50 L771.50,636.25 L779.50,633.25 L787.50,632.00 L795.50,630.00 L803.50,627.00 L811.50,623.50 L819.50,623.25 L827.50,621.25 L835.50,620.25 L843.50,620.25 L851.50,620.00 L859.50,616.25 L867.50,613.25 L875.50,614.00 L883.50,615.00 L891.50,617.00 L899.50,618.25 L907.50,619.25 L915.50,615.00 L923.50,611.00 L931.50,607.75 L939.50,605.00 L947.50,603.00 L955.50,601.25 L963.50,600.00 L971.50,599.25 L979.50,599.25 L987.50,600.50" fill="none" stroke="#111" stroke-width="1.1" stroke-linejoin="round"/>
<line x1="587.5" y1="681.2" x2="764" y2="654.2" stroke="#6C9BEF" stroke-width="2.6"/>
<polygon points="770.5,653.2 762.3,648.2 763.8,658.8" fill="#6C9BEF"/>
</g>
<g class="crisp">
<rect x="1065" y="636" width="4" height="1" fill="#95A6AF"/>
<rect x="1065" y="655" width="4" height="1" fill="#95A6AF"/>
<rect x="1065" y="674" width="4" height="1" fill="#95A6AF"/>
<rect x="1065" y="626" width="2" height="1" fill="#95A6AF"/>
<rect x="1065" y="645" width="2" height="1" fill="#95A6AF"/>
<rect x="1065" y="664" width="2" height="1" fill="#95A6AF"/>
</g>
<text x="1071" y="639.5" text-anchor="start" class="ax" >-200</text>
<text x="1071" y="658.5" text-anchor="start" class="ax" >-400</text>
<text x="1071" y="677.5" text-anchor="start" class="ax" >-600</text>
<g class="crisp">
<rect x="1069.5" y="586.5" width="36" height="12" fill="url(#gLab)" stroke="#A0A9AE"/>
</g>
<text x="1071" y="598" text-anchor="start" class="ax" >184,23</text>
<g class="crisp">
<rect x="1069.5" y="595.5" width="36" height="12" fill="url(#gLab)" stroke="#A0A9AE"/>
<rect x="1065" y="600" width="4" height="1" fill="#000"/>
<rect x="1065" y="603" width="4" height="1" fill="#1E9BF0"/>
<rect x="1065" y="613" width="4" height="1" fill="#FFFF00"/>
<rect x="1065" y="589" width="2" height="1" fill="#95A6AF"/><rect x="1065" y="607" width="2" height="1" fill="#95A6AF"/>
</g>
<text x="1071" y="606.5" text-anchor="start" class="ax" style="fill:#1E9BF0">145,75</text>
<rect class="crisp" x="1069.5" y="607.5" width="36" height="15" fill="url(#gLab)" stroke="#A0A9AE"/>
<text x="1071" y="619" text-anchor="start" class="ax" style="fill:#FFFF00">38,483</text>
<g class="crisp">
<rect x="42" y="685" width="1" height="4" fill="#95A6AF"/>
<rect x="74" y="685" width="1" height="4" fill="#95A6AF"/>
<rect x="114" y="685" width="1" height="4" fill="#95A6AF"/>
<rect x="146" y="685" width="1" height="4" fill="#95A6AF"/>
<rect x="178" y="685" width="1" height="4" fill="#95A6AF"/>
<rect x="218" y="685" width="1" height="4" fill="#95A6AF"/>
<rect x="250" y="685" width="1" height="4" fill="#95A6AF"/>
<rect x="282" y="685" width="1" height="4" fill="#95A6AF"/>
<rect x="322" y="685" width="1" height="4" fill="#95A6AF"/>
<rect x="354" y="685" width="1" height="4" fill="#95A6AF"/>
<rect x="394" y="685" width="1" height="4" fill="#95A6AF"/>
<rect x="426" y="685" width="1" height="4" fill="#95A6AF"/>
<rect x="458" y="685" width="1" height="4" fill="#95A6AF"/>
<rect x="498" y="685" width="1" height="4" fill="#95A6AF"/>
<rect x="530" y="685" width="1" height="4" fill="#95A6AF"/>
<rect x="563" y="685" width="1" height="4" fill="#95A6AF"/>
<rect x="603" y="685" width="1" height="4" fill="#95A6AF"/>
<rect x="635" y="685" width="1" height="4" fill="#95A6AF"/>
<rect x="667" y="685" width="1" height="4" fill="#95A6AF"/>
<rect x="707" y="685" width="1" height="4" fill="#95A6AF"/>
<rect x="739" y="685" width="1" height="4" fill="#95A6AF"/>
<rect x="771" y="685" width="1" height="4" fill="#95A6AF"/>
<rect x="811" y="685" width="1" height="4" fill="#95A6AF"/>
<rect x="843" y="685" width="1" height="4" fill="#95A6AF"/>
<rect x="883" y="685" width="1" height="4" fill="#95A6AF"/>
<rect x="915" y="685" width="1" height="4" fill="#95A6AF"/>
<rect x="947" y="685" width="1" height="4" fill="#95A6AF"/>
<rect x="987" y="685" width="1" height="4" fill="#95A6AF"/>
<rect x="1019" y="685" width="1" height="4" fill="#95A6AF"/>
<rect x="1051" y="685" width="1" height="4" fill="#95A6AF"/>
</g>
<text x="42.5" y="700.5" text-anchor="middle" class="mo" >nov</text>
<text x="74.5" y="700.5" text-anchor="middle" class="mo" >dic</text>
<text x="114.5" y="701" text-anchor="middle" class="yr" >2015</text>
<text x="146.5" y="700.5" text-anchor="middle" class="mo" >feb</text>
<text x="178.5" y="700.5" text-anchor="middle" class="mo" >mar</text>
<text x="218.5" y="700.5" text-anchor="middle" class="mo" >abr</text>
<text x="250.5" y="700.5" text-anchor="middle" class="mo" >may</text>
<text x="282.5" y="700.5" text-anchor="middle" class="mo" >jun</text>
<text x="322.5" y="700.5" text-anchor="middle" class="mo" >jul</text>
<text x="354.5" y="700.5" text-anchor="middle" class="mo" >ago</text>
<text x="394.5" y="700.5" text-anchor="middle" class="mo" >sep</text>
<text x="426.5" y="700.5" text-anchor="middle" class="mo" >oct</text>
<text x="458.5" y="700.5" text-anchor="middle" class="mo" >nov</text>
<text x="498.5" y="700.5" text-anchor="middle" class="mo" >dic</text>
<text x="530.5" y="701" text-anchor="middle" class="yr" >2016</text>
<text x="563.5" y="700.5" text-anchor="middle" class="mo" >feb</text>
<text x="603.5" y="700.5" text-anchor="middle" class="mo" >mar</text>
<text x="635.5" y="700.5" text-anchor="middle" class="mo" >abr</text>
<text x="667.5" y="700.5" text-anchor="middle" class="mo" >may</text>
<text x="707.5" y="700.5" text-anchor="middle" class="mo" >jun</text>
<text x="739.5" y="700.5" text-anchor="middle" class="mo" >jul</text>
<text x="771.5" y="700.5" text-anchor="middle" class="mo" >ago</text>
<text x="811.5" y="700.5" text-anchor="middle" class="mo" >sep</text>
<text x="843.5" y="700.5" text-anchor="middle" class="mo" >oct</text>
<text x="883.5" y="700.5" text-anchor="middle" class="mo" >nov</text>
<text x="915.5" y="700.5" text-anchor="middle" class="mo" >dic</text>
<text x="947.5" y="701" text-anchor="middle" class="yr" >2017</text>
<text x="987.5" y="700.5" text-anchor="middle" class="mo" >feb</text>
<text x="1019.5" y="700.5" text-anchor="middle" class="mo" >mar</text>
<text x="1051.5" y="700.5" text-anchor="middle" class="mo" >abr</text>
<g class="crisp">
<rect x="7" y="10" width="1" height="11" fill="#222"/><rect x="4" y="12" width="7" height="7" fill="#222"/><rect x="5" y="13" width="5" height="5" fill="#7D858C"/>
<rect x="15" y="5" width="1" height="16" fill="#4F9A12"/><rect x="12" y="8" width="7" height="10" fill="#4F9A12"/><rect x="13" y="9" width="5" height="8" fill="#98DC30"/>
</g>
<polygon points="24,12 31,12 27.5,16.2" fill="#000"/>
<text x="35" y="17" text-anchor="start" class="" style="letter-spacing:-0.35px">IBX35</text>
<rect class="crisp" x="73.5" y="7.5" width="11" height="11" fill="#FBFDFE" stroke="#A9B4BA"/>
<text x="79.2" y="16.8" text-anchor="middle" style="font-family:'Liberation Serif',serif;font-size:13px;font-weight:bold;fill:#848E95">i</text>
<text x="92" y="17" text-anchor="start" class="" style="fill:#A81010;letter-spacing:-0.08px">9.357,30 (-1,11%)</text>
<text x="186" y="17" text-anchor="start" class="" >06-feb-2017 IBEX35 Index</text>
<rect x="1047" y="8" width="20" height="14" rx="2.5" fill="#F4FAFD"/>
<rect x="1047" y="7" width="20" height="14" rx="2.5" fill="#8FA1AB"/>
<g class="crisp" fill="#EAF4F9">
<rect x="1050" y="10" width="2" height="2"/>
<rect x="1053" y="10" width="2" height="2"/>
<rect x="1056" y="10" width="2" height="2"/>
<rect x="1059" y="10" width="2" height="2"/>
<rect x="1062" y="10" width="2" height="2"/>
<rect x="1050" y="13" width="2" height="2"/>
<rect x="1053" y="13" width="2" height="2"/>
<rect x="1056" y="13" width="2" height="2"/>
<rect x="1059" y="13" width="2" height="2"/>
<rect x="1062" y="13" width="2" height="2"/>
<rect x="1053" y="17" width="8" height="2"/>
</g>
<g class="crisp">
<rect x="1073" y="17" width="9" height="1" fill="#F4FAFD"/><rect x="1073" y="15" width="9" height="2" fill="#8FA1AB"/>
<rect x="1088" y="17" width="9" height="1" fill="#F4FAFD"/>
<rect x="1088" y="8" width="9" height="2" fill="#8FA1AB"/><rect x="1088" y="8" width="1" height="9" fill="#8FA1AB"/><rect x="1096" y="8" width="1" height="9" fill="#8FA1AB"/><rect x="1088" y="16" width="9" height="1" fill="#8FA1AB"/>
</g>
<path d="M1103.5,9.5 L1111.5,17.5 M1111.5,9.5 L1103.5,17.5" stroke="#F4FAFD" stroke-width="1.8" fill="none"/>
<path d="M1103.5,8.7 L1111.5,16.5 M1111.5,8.7 L1103.5,16.5" stroke="#8FA1AB" stroke-width="1.8" fill="none"/>
<rect x="168.5" y="30.5" width="96.5" height="20.7" rx="3" fill="#FFFFFF" stroke="#9AAAB3" stroke-width="1"/>
<rect x="248.5" y="32.5" width="14" height="16.5" rx="1.5" fill="url(#gSpin)"/>
<text x="246.7" y="44.8" text-anchor="end" class="" style="letter-spacing:-0.2px">300</text>
<polygon points="255.4,35.2 258.5,38.7 252.3,38.7" fill="#000"/><polygon points="252.3,43.6 258.5,43.6 255.4,46.6" fill="#000"/>
<rect x="266.5" y="30.5" width="107" height="20.7" rx="3" fill="#FFFFFF" stroke="#9AAAB3" stroke-width="1"/>
<text x="270" y="44.8" text-anchor="start" class="" style="letter-spacing:0.2px">(x) unidades</text>
<rect x="355" y="32.5" width="16.5" height="16.5" rx="1.5" fill="url(#gSpin)"/>
<polygon points="360,39.3 367,39.3 363.5,43.3" fill="#000"/>
<rect x="586.5" y="30.5" width="102" height="20.7" rx="3" fill="#FFFFFF" stroke="#9AAAB3" stroke-width="1"/>
<text x="591" y="44.8" text-anchor="start" class="" style="letter-spacing:0.12px">Semanal</text>
<rect x="670.5" y="32.5" width="16" height="16.5" rx="1.5" fill="url(#gSpin)"/>
<polygon points="674.5,39.3 681.5,39.3 678,43.3" fill="#000"/>
<defs><linearGradient id="gIcoBtn" x1="0" y1="0" x2="0" y2="1"><stop offset="0" stop-color="#FCFCFC"/><stop offset="1" stop-color="#E9EBEC"/></linearGradient></defs>
<rect x="901.5" y="27.5" width="49.3" height="26.8" rx="3.5" fill="url(#gIcoBtn)" stroke="#98A8B2" stroke-width="1"/>
<rect class="crisp" x="936" y="28" width="1" height="26" fill="#9AA9B2"/>
<polygon points="939.8,39.9 947.2,39.9 943.5,44.2" fill="#000"/>
<g>
<path d="M904.1,42.5 C907,40.5 910.5,32.3 914.8,32.3 C916.2,32.3 917.3,34 918.2,35.4 C914,35.3 911,43 907,44.4 C906,44.8 905,44.5 904.1,43 Z" fill="#F8C8C8"/>
<path d="M918.2,35.4 C922,35.4 925,42 928.3,42.9 C926.5,45 925,47 923.4,47 C921,47 919.6,39 918.2,35.4 Z" fill="#C8EEC8"/>
<path d="M928.3,42.9 C930.5,39.5 932.5,35 933.6,31.2 L933.9,40.1 C933,41.5 931.5,42.9 929.3,43 Z" fill="#F8C8C8"/>
<path d="M904.1,42.5 C907,40.5 910.5,32.3 914.8,32.3 C919,32.3 920,47 923.4,47 C927,47 931.5,38 933.6,31.2" stroke="#CC2828" stroke-width="1.2" fill="none"/>
<path d="M904.1,43 C905,44.5 906,44.8 907,44.4 C911,43 914,35.3 918,35.3 C922,35.3 926,43.2 929.3,43 C931.5,42.9 933,41.5 933.9,40.1" stroke="#18A018" stroke-width="1.2" fill="none"/>
<path d="M907.4,30.4 h4.1 v3.1 h3.1 v4 h-3.1 v3.1 h-4.1 v-3.1 h-3.1 v-4 h3.1 z" fill="#fff" stroke="#6A7C8C" stroke-width="1"/>
<polygon points="925,32 927.8,32 927.8,35 929.3,35 926.4,38.2 923.5,35 925,35" fill="#F02828"/>
<polygon points="915.5,40 918.4,43.2 916.9,43.2 916.9,46 914.1,46 914.1,43.2 912.6,43.2" fill="#10B810"/>
<g class="crisp"><rect x="905" y="47" width="4" height="4" fill="#10B810"/><rect x="910" y="49" width="4" height="2" fill="#E02020"/><rect x="915" y="48" width="4" height="3" fill="#10B810"/><rect x="920" y="49" width="4" height="2" fill="#10B810"/><rect x="925" y="49" width="4" height="2" fill="#E02020"/><rect x="930" y="46" width="4" height="5" fill="#10B810"/><rect x="904" y="51" width="30" height="1" fill="#1818E8"/></g>
</g>
<rect class="crisp" x="76" y="715.5" width="910" height="15" fill="#C8DAE4" />
<rect class="crisp" x="70" y="715" width="925" height="1" fill="#95A6AF"/><rect class="crisp" x="70" y="730" width="925" height="1" fill="#95A6AF"/>
<path d="M76.5,715.5 H65 Q61.5,715.5 61.5,719 V727 Q61.5,730.5 65,730.5 H76.5 Z" fill="url(#gBtn)" stroke="#95A6AF"/>
<rect class="crisp" x="76" y="716" width="1" height="14" fill="#95A6AF"/>
<polygon points="66.6,723 70.3,719.6 70.3,726.4" fill="#000"/>
<path d="M986.5,715.5 H998 Q1001.5,715.5 1001.5,719 V727 Q1001.5,730.5 998,730.5 H986.5 Z" fill="url(#gBtn)" stroke="#95A6AF"/>
<polygon points="996.4,723 992.7,719.6 992.7,726.4" fill="#000"/>
<rect x="846.5" y="715.5" width="138.3" height="15" rx="3" fill="url(#gThumb)" stroke="#95A6AF"/>
<g class="crisp" fill="#7E8C94"><rect x="913" y="720" width="7" height="1"/><rect x="913" y="722" width="7" height="1"/><rect x="913" y="724" width="7" height="1"/></g>
<g>
<rect x="10.5" y="716.6" width="15.2" height="13" rx="1.6" fill="#fff" stroke="#1F4FD0" stroke-width="1.2"/><rect x="11" y="717" width="14.2" height="1.6" fill="#5C86E0"/>
<path d="M11.6,728.6 L14.6,722.8 L16.6,726.4 L21.4,721.6" stroke="#22B422" stroke-width="1" fill="none"/>
<path d="M15,724 L16.6,726.3" stroke="#F02020" stroke-width="1.1" fill="none"/>
<path d="M13.6,724.2 C14.2,719.6 17,716.8 21.4,716.5 L21.4,713.2 L28,718.5 L21.4,723.7 L21.4,720.5 C18.5,720.4 16,721.6 13.6,724.2 Z" fill="#4FD04F" stroke="#2EA82E" stroke-width="0.6"/>
<path d="M15.2,720.6 C16.6,718.6 18.8,717.6 21.9,717.3 L21.9,714.6 L26.4,718.3 C22,718.2 18,719 15.2,720.6 Z" fill="#A6F0A6" opacity="0.75"/>
<polygon points="20.6,727.6 27.4,727.6 24,731.6" fill="#F4FAFD"/>
<polygon points="21.2,728.2 26.8,728.2 24,731" fill="#000"/>
<ellipse cx="39.55" cy="718.6" rx="3.75" ry="3.8" fill="#fff" stroke="#000" stroke-width="1.25"/>
<ellipse cx="39.55" cy="727.6" rx="3.75" ry="3.5" fill="#fff" stroke="#000" stroke-width="1.25"/>
<rect x="38.55" y="717.2" width="2" height="12" rx="1" fill="#fff" stroke="#000" stroke-width="0.9"/>
<g class="crisp"><rect x="48" y="718" width="1" height="9" fill="#C02828"/><rect x="46" y="719" width="5" height="6" fill="#C02828"/><rect x="47" y="720" width="3" height="4" fill="#F07070"/>
<rect x="54" y="712" width="1" height="15" fill="#149614"/><rect x="52" y="715" width="5" height="9" fill="#149614"/><rect x="53" y="716" width="3" height="7" fill="#5ADC5A"/></g>
<polygon points="48.4,727.6 55.8,727.6 52.1,731.6" fill="#F4FAFD"/>
<polygon points="49,728.2 55.2,728.2 52.1,731" fill="#000"/>
</g>
<g>
<g class="crisp"><rect x="1020" y="713" width="1" height="20" fill="#333"/><rect x="1017" y="715" width="7" height="16" fill="#444"/><rect x="1018" y="716" width="5" height="14" fill="#3CC83C"/>
<rect x="1012" y="721" width="1" height="12" fill="#555"/><rect x="1009" y="723" width="7" height="8" fill="#777"/><rect x="1010" y="724" width="5" height="6" fill="#F08888"/></g>
<path d="M1010.3,729.6 L1016.6,722.6 C1015.6,719.8 1016.9,717.6 1019.6,716.9 L1020.4,717.6 L1018.7,719.6 L1019.9,721 L1022.1,719.9 L1022.9,720.8 C1022.6,723.4 1020.4,724.9 1018.2,724.3 L1012.2,731.3 C1011.2,732 1009.8,730.8 1010.3,729.6 Z" fill="#fff" stroke="#444" stroke-width="0.8"/>
</g>
<defs><radialGradient id="gLens" cx="0.4" cy="0.35" r="0.7"><stop offset="0" stop-color="#FFFFFF"/><stop offset="1" stop-color="#9AA4AA"/></radialGradient></defs>
<line x1="1046.2" y1="725" x2="1051.8" y2="730.6" stroke="#000" stroke-width="3.2" stroke-linecap="round"/>
<circle cx="1041.9" cy="720.5" r="5.7" fill="url(#gLens)" stroke="#222" stroke-width="1.3"/>
<path d="M1051.6,716.5 V724.5" stroke="#1010F0" stroke-width="1.3" fill="none"/><polygon points="1051.6,714.8 1054.2,718.2 1049,718.2" fill="#1010F0"/><polygon points="1051.6,726.2 1054.2,722.8 1049,722.8" fill="#1010F0"/>
<path d="M1036.5,729.7 H1043.5" stroke="#1010F0" stroke-width="1.3" fill="none"/><polygon points="1034.8,729.7 1038.2,727.1 1038.2,732.3" fill="#1010F0"/><polygon points="1045.2,729.7 1041.8,727.1 1041.8,732.3" fill="#1010F0"/>
<line x1="1074" y1="725.5" x2="1080" y2="731" stroke="#000" stroke-width="3" stroke-linecap="round"/>
<circle cx="1070" cy="721" r="5.5" fill="#fff" stroke="#000" stroke-width="1.2"/>
<rect class="crisp" x="1067" y="720" width="6" height="2" fill="#1010F0"/>
<line x1="1102" y1="725.5" x2="1108" y2="731" stroke="#000" stroke-width="3" stroke-linecap="round"/>
<circle cx="1098" cy="721" r="5.5" fill="#fff" stroke="#000" stroke-width="1.2"/>
<rect class="crisp" x="1095" y="720" width="6" height="2" fill="#1010F0"/>
<rect class="crisp" x="1097" y="718" width="2" height="6" fill="#1010F0"/>
</svg></body></html>
